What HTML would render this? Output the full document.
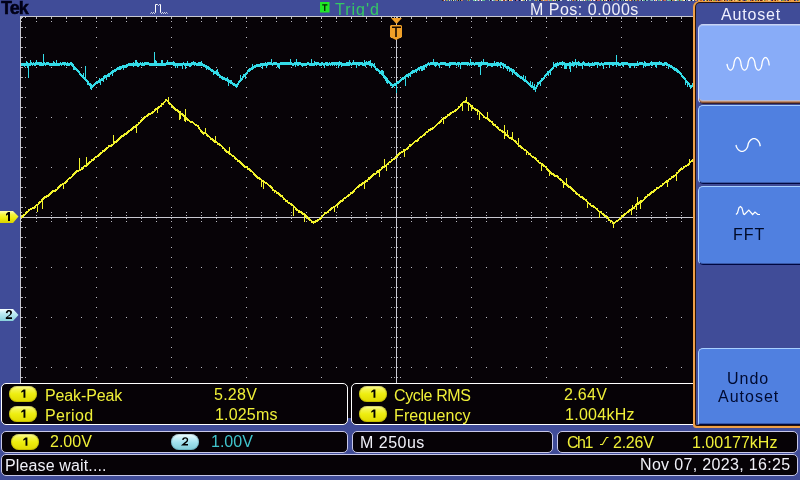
<!DOCTYPE html>
<html><head><meta charset="utf-8">
<style>
*{margin:0;padding:0;box-sizing:border-box}
html,body{width:800px;height:480px;overflow:hidden;background:#404c98;font-family:"Liberation Sans",sans-serif}
.a{position:absolute;white-space:nowrap;line-height:normal;will-change:transform}
.box{position:absolute;background:#060206;border:1px solid #ffffff;border-radius:5px}
.bx2{border-color:#c8c8e8}
.bd{position:absolute;width:28px;height:16px;border-radius:8px;background:linear-gradient(#fafab0 0%,#f4f450 20%,#eeee10 50%,#e0d800 100%);box-shadow:inset 0 0 0 1px rgba(150,140,0,0.35);color:#000;font-size:13px;font-weight:bold;text-align:center;line-height:16px}
.bd2{background:linear-gradient(#f8ffff 0%,#c8f0f8 25%,#a0e0ec 55%,#80ccd8 100%);box-shadow:inset 0 0 0 1px rgba(60,120,140,0.3)}
.btn{position:absolute;left:698px;width:110px;border-radius:5px 0 0 5px}
.bn{background:#5080e0;border-top:1px solid #a8d0ff;border-left:1px solid #a8d0ff;border-bottom:1px solid #000840;box-shadow:inset 0 -1px 0 #3858a8}
</style></head><body>
<svg class="a" style="left:0;top:0" width="800" height="480" viewBox="0 0 800 480" shape-rendering="crispEdges">
<rect x="20" y="16" width="673" height="402" fill="#070307"/>
<path d="M20 16h673v1H21v401h-1z" fill="#c8c8d0"/>
<path d="M21 21h1v1h-1zM21 212h1v1h-1zM21 215h1v1h-1zM21 218h1v1h-1zM21 221h1v1h-1zM25 17h1v1h-1zM25 27h1v1h-1zM25 37h1v1h-1zM25 47h1v1h-1zM25 57h1v1h-1zM25 67h1v1h-1zM25 77h1v1h-1zM25 87h1v1h-1zM25 97h1v1h-1zM25 107h1v1h-1zM25 117h1v1h-1zM25 127h1v1h-1zM25 137h1v1h-1zM25 147h1v1h-1zM25 157h1v1h-1zM25 167h1v1h-1zM25 177h1v1h-1zM25 187h1v1h-1zM25 197h1v1h-1zM25 207h1v1h-1zM25 217h1v1h-1zM25 227h1v1h-1zM25 237h1v1h-1zM25 247h1v1h-1zM25 257h1v1h-1zM25 267h1v1h-1zM25 277h1v1h-1zM25 287h1v1h-1zM25 297h1v1h-1zM25 307h1v1h-1zM25 317h1v1h-1zM25 327h1v1h-1zM25 337h1v1h-1zM25 347h1v1h-1zM25 357h1v1h-1zM25 367h1v1h-1zM25 377h1v1h-1zM25 387h1v1h-1zM25 397h1v1h-1zM25 407h1v1h-1zM25 417h1v1h-1zM36 21h1v1h-1zM36 67h1v1h-1zM36 117h1v1h-1zM36 167h1v1h-1zM36 212h1v1h-1zM36 215h1v1h-1zM36 218h1v1h-1zM36 221h1v1h-1zM36 267h1v1h-1zM36 317h1v1h-1zM36 367h1v1h-1zM36 417h1v1h-1zM51 21h1v1h-1zM51 67h1v1h-1zM51 117h1v1h-1zM51 167h1v1h-1zM51 212h1v1h-1zM51 215h1v1h-1zM51 218h1v1h-1zM51 221h1v1h-1zM51 267h1v1h-1zM51 317h1v1h-1zM51 367h1v1h-1zM51 417h1v1h-1zM66 21h1v1h-1zM66 67h1v1h-1zM66 117h1v1h-1zM66 167h1v1h-1zM66 212h1v1h-1zM66 215h1v1h-1zM66 218h1v1h-1zM66 221h1v1h-1zM66 267h1v1h-1zM66 317h1v1h-1zM66 367h1v1h-1zM66 417h1v1h-1zM81 21h1v1h-1zM81 67h1v1h-1zM81 117h1v1h-1zM81 167h1v1h-1zM81 212h1v1h-1zM81 215h1v1h-1zM81 218h1v1h-1zM81 221h1v1h-1zM81 267h1v1h-1zM81 317h1v1h-1zM81 367h1v1h-1zM81 417h1v1h-1zM96 21h1v1h-1zM96 27h1v1h-1zM96 37h1v1h-1zM96 47h1v1h-1zM96 57h1v1h-1zM96 67h1v1h-1zM96 77h1v1h-1zM96 87h1v1h-1zM96 97h1v1h-1zM96 107h1v1h-1zM96 117h1v1h-1zM96 127h1v1h-1zM96 137h1v1h-1zM96 147h1v1h-1zM96 157h1v1h-1zM96 167h1v1h-1zM96 177h1v1h-1zM96 187h1v1h-1zM96 197h1v1h-1zM96 207h1v1h-1zM96 212h1v1h-1zM96 215h1v1h-1zM96 218h1v1h-1zM96 221h1v1h-1zM96 227h1v1h-1zM96 237h1v1h-1zM96 247h1v1h-1zM96 257h1v1h-1zM96 267h1v1h-1zM96 277h1v1h-1zM96 287h1v1h-1zM96 297h1v1h-1zM96 307h1v1h-1zM96 317h1v1h-1zM96 327h1v1h-1zM96 337h1v1h-1zM96 347h1v1h-1zM96 357h1v1h-1zM96 367h1v1h-1zM96 377h1v1h-1zM96 387h1v1h-1zM96 397h1v1h-1zM96 407h1v1h-1zM96 417h1v1h-1zM111 21h1v1h-1zM111 67h1v1h-1zM111 117h1v1h-1zM111 167h1v1h-1zM111 212h1v1h-1zM111 215h1v1h-1zM111 218h1v1h-1zM111 221h1v1h-1zM111 267h1v1h-1zM111 317h1v1h-1zM111 367h1v1h-1zM111 417h1v1h-1zM126 21h1v1h-1zM126 67h1v1h-1zM126 117h1v1h-1zM126 167h1v1h-1zM126 212h1v1h-1zM126 215h1v1h-1zM126 218h1v1h-1zM126 221h1v1h-1zM126 267h1v1h-1zM126 317h1v1h-1zM126 367h1v1h-1zM126 417h1v1h-1zM141 21h1v1h-1zM141 67h1v1h-1zM141 117h1v1h-1zM141 167h1v1h-1zM141 212h1v1h-1zM141 215h1v1h-1zM141 218h1v1h-1zM141 221h1v1h-1zM141 267h1v1h-1zM141 317h1v1h-1zM141 367h1v1h-1zM141 417h1v1h-1zM156 21h1v1h-1zM156 67h1v1h-1zM156 117h1v1h-1zM156 167h1v1h-1zM156 212h1v1h-1zM156 215h1v1h-1zM156 218h1v1h-1zM156 221h1v1h-1zM156 267h1v1h-1zM156 317h1v1h-1zM156 367h1v1h-1zM156 417h1v1h-1zM171 21h1v1h-1zM171 27h1v1h-1zM171 37h1v1h-1zM171 47h1v1h-1zM171 57h1v1h-1zM171 67h1v1h-1zM171 77h1v1h-1zM171 87h1v1h-1zM171 97h1v1h-1zM171 107h1v1h-1zM171 117h1v1h-1zM171 127h1v1h-1zM171 137h1v1h-1zM171 147h1v1h-1zM171 157h1v1h-1zM171 167h1v1h-1zM171 177h1v1h-1zM171 187h1v1h-1zM171 197h1v1h-1zM171 207h1v1h-1zM171 212h1v1h-1zM171 215h1v1h-1zM171 218h1v1h-1zM171 221h1v1h-1zM171 227h1v1h-1zM171 237h1v1h-1zM171 247h1v1h-1zM171 257h1v1h-1zM171 267h1v1h-1zM171 277h1v1h-1zM171 287h1v1h-1zM171 297h1v1h-1zM171 307h1v1h-1zM171 317h1v1h-1zM171 327h1v1h-1zM171 337h1v1h-1zM171 347h1v1h-1zM171 357h1v1h-1zM171 367h1v1h-1zM171 377h1v1h-1zM171 387h1v1h-1zM171 397h1v1h-1zM171 407h1v1h-1zM171 417h1v1h-1zM186 21h1v1h-1zM186 67h1v1h-1zM186 117h1v1h-1zM186 167h1v1h-1zM186 212h1v1h-1zM186 215h1v1h-1zM186 218h1v1h-1zM186 221h1v1h-1zM186 267h1v1h-1zM186 317h1v1h-1zM186 367h1v1h-1zM186 417h1v1h-1zM201 21h1v1h-1zM201 67h1v1h-1zM201 117h1v1h-1zM201 167h1v1h-1zM201 212h1v1h-1zM201 215h1v1h-1zM201 218h1v1h-1zM201 221h1v1h-1zM201 267h1v1h-1zM201 317h1v1h-1zM201 367h1v1h-1zM201 417h1v1h-1zM216 21h1v1h-1zM216 67h1v1h-1zM216 117h1v1h-1zM216 167h1v1h-1zM216 212h1v1h-1zM216 215h1v1h-1zM216 218h1v1h-1zM216 221h1v1h-1zM216 267h1v1h-1zM216 317h1v1h-1zM216 367h1v1h-1zM216 417h1v1h-1zM231 21h1v1h-1zM231 67h1v1h-1zM231 117h1v1h-1zM231 167h1v1h-1zM231 212h1v1h-1zM231 215h1v1h-1zM231 218h1v1h-1zM231 221h1v1h-1zM231 267h1v1h-1zM231 317h1v1h-1zM231 367h1v1h-1zM231 417h1v1h-1zM246 21h1v1h-1zM246 27h1v1h-1zM246 37h1v1h-1zM246 47h1v1h-1zM246 57h1v1h-1zM246 67h1v1h-1zM246 77h1v1h-1zM246 87h1v1h-1zM246 97h1v1h-1zM246 107h1v1h-1zM246 117h1v1h-1zM246 127h1v1h-1zM246 137h1v1h-1zM246 147h1v1h-1zM246 157h1v1h-1zM246 167h1v1h-1zM246 177h1v1h-1zM246 187h1v1h-1zM246 197h1v1h-1zM246 207h1v1h-1zM246 212h1v1h-1zM246 215h1v1h-1zM246 218h1v1h-1zM246 221h1v1h-1zM246 227h1v1h-1zM246 237h1v1h-1zM246 247h1v1h-1zM246 257h1v1h-1zM246 267h1v1h-1zM246 277h1v1h-1zM246 287h1v1h-1zM246 297h1v1h-1zM246 307h1v1h-1zM246 317h1v1h-1zM246 327h1v1h-1zM246 337h1v1h-1zM246 347h1v1h-1zM246 357h1v1h-1zM246 367h1v1h-1zM246 377h1v1h-1zM246 387h1v1h-1zM246 397h1v1h-1zM246 407h1v1h-1zM246 417h1v1h-1zM261 21h1v1h-1zM261 67h1v1h-1zM261 117h1v1h-1zM261 167h1v1h-1zM261 212h1v1h-1zM261 215h1v1h-1zM261 218h1v1h-1zM261 221h1v1h-1zM261 267h1v1h-1zM261 317h1v1h-1zM261 367h1v1h-1zM261 417h1v1h-1zM276 21h1v1h-1zM276 67h1v1h-1zM276 117h1v1h-1zM276 167h1v1h-1zM276 212h1v1h-1zM276 215h1v1h-1zM276 218h1v1h-1zM276 221h1v1h-1zM276 267h1v1h-1zM276 317h1v1h-1zM276 367h1v1h-1zM276 417h1v1h-1zM291 21h1v1h-1zM291 67h1v1h-1zM291 117h1v1h-1zM291 167h1v1h-1zM291 212h1v1h-1zM291 215h1v1h-1zM291 218h1v1h-1zM291 221h1v1h-1zM291 267h1v1h-1zM291 317h1v1h-1zM291 367h1v1h-1zM291 417h1v1h-1zM306 21h1v1h-1zM306 67h1v1h-1zM306 117h1v1h-1zM306 167h1v1h-1zM306 212h1v1h-1zM306 215h1v1h-1zM306 218h1v1h-1zM306 221h1v1h-1zM306 267h1v1h-1zM306 317h1v1h-1zM306 367h1v1h-1zM306 417h1v1h-1zM321 21h1v1h-1zM321 27h1v1h-1zM321 37h1v1h-1zM321 47h1v1h-1zM321 57h1v1h-1zM321 67h1v1h-1zM321 77h1v1h-1zM321 87h1v1h-1zM321 97h1v1h-1zM321 107h1v1h-1zM321 117h1v1h-1zM321 127h1v1h-1zM321 137h1v1h-1zM321 147h1v1h-1zM321 157h1v1h-1zM321 167h1v1h-1zM321 177h1v1h-1zM321 187h1v1h-1zM321 197h1v1h-1zM321 207h1v1h-1zM321 212h1v1h-1zM321 215h1v1h-1zM321 218h1v1h-1zM321 221h1v1h-1zM321 227h1v1h-1zM321 237h1v1h-1zM321 247h1v1h-1zM321 257h1v1h-1zM321 267h1v1h-1zM321 277h1v1h-1zM321 287h1v1h-1zM321 297h1v1h-1zM321 307h1v1h-1zM321 317h1v1h-1zM321 327h1v1h-1zM321 337h1v1h-1zM321 347h1v1h-1zM321 357h1v1h-1zM321 367h1v1h-1zM321 377h1v1h-1zM321 387h1v1h-1zM321 397h1v1h-1zM321 407h1v1h-1zM321 417h1v1h-1zM336 21h1v1h-1zM336 67h1v1h-1zM336 117h1v1h-1zM336 167h1v1h-1zM336 212h1v1h-1zM336 215h1v1h-1zM336 218h1v1h-1zM336 221h1v1h-1zM336 267h1v1h-1zM336 317h1v1h-1zM336 367h1v1h-1zM336 417h1v1h-1zM351 21h1v1h-1zM351 67h1v1h-1zM351 117h1v1h-1zM351 167h1v1h-1zM351 212h1v1h-1zM351 215h1v1h-1zM351 218h1v1h-1zM351 221h1v1h-1zM351 267h1v1h-1zM351 317h1v1h-1zM351 367h1v1h-1zM351 417h1v1h-1zM366 21h1v1h-1zM366 67h1v1h-1zM366 117h1v1h-1zM366 167h1v1h-1zM366 212h1v1h-1zM366 215h1v1h-1zM366 218h1v1h-1zM366 221h1v1h-1zM366 267h1v1h-1zM366 317h1v1h-1zM366 367h1v1h-1zM366 417h1v1h-1zM381 21h1v1h-1zM381 67h1v1h-1zM381 117h1v1h-1zM381 167h1v1h-1zM381 212h1v1h-1zM381 215h1v1h-1zM381 218h1v1h-1zM381 221h1v1h-1zM381 267h1v1h-1zM381 317h1v1h-1zM381 367h1v1h-1zM381 417h1v1h-1zM391 17h1v1h-1zM391 27h1v1h-1zM391 37h1v1h-1zM391 47h1v1h-1zM391 57h1v1h-1zM391 67h1v1h-1zM391 77h1v1h-1zM391 87h1v1h-1zM391 97h1v1h-1zM391 107h1v1h-1zM391 117h1v1h-1zM391 127h1v1h-1zM391 137h1v1h-1zM391 147h1v1h-1zM391 157h1v1h-1zM391 167h1v1h-1zM391 177h1v1h-1zM391 187h1v1h-1zM391 197h1v1h-1zM391 207h1v1h-1zM391 217h1v1h-1zM391 227h1v1h-1zM391 237h1v1h-1zM391 247h1v1h-1zM391 257h1v1h-1zM391 267h1v1h-1zM391 277h1v1h-1zM391 287h1v1h-1zM391 297h1v1h-1zM391 307h1v1h-1zM391 317h1v1h-1zM391 327h1v1h-1zM391 337h1v1h-1zM391 347h1v1h-1zM391 357h1v1h-1zM391 367h1v1h-1zM391 377h1v1h-1zM391 387h1v1h-1zM391 397h1v1h-1zM391 407h1v1h-1zM391 417h1v1h-1zM394 17h1v1h-1zM394 27h1v1h-1zM394 37h1v1h-1zM394 47h1v1h-1zM394 57h1v1h-1zM394 67h1v1h-1zM394 77h1v1h-1zM394 87h1v1h-1zM394 97h1v1h-1zM394 107h1v1h-1zM394 117h1v1h-1zM394 127h1v1h-1zM394 137h1v1h-1zM394 147h1v1h-1zM394 157h1v1h-1zM394 167h1v1h-1zM394 177h1v1h-1zM394 187h1v1h-1zM394 197h1v1h-1zM394 207h1v1h-1zM394 217h1v1h-1zM394 227h1v1h-1zM394 237h1v1h-1zM394 247h1v1h-1zM394 257h1v1h-1zM394 267h1v1h-1zM394 277h1v1h-1zM394 287h1v1h-1zM394 297h1v1h-1zM394 307h1v1h-1zM394 317h1v1h-1zM394 327h1v1h-1zM394 337h1v1h-1zM394 347h1v1h-1zM394 357h1v1h-1zM394 367h1v1h-1zM394 377h1v1h-1zM394 387h1v1h-1zM394 397h1v1h-1zM394 407h1v1h-1zM394 417h1v1h-1zM396 21h1v1h-1zM396 212h1v1h-1zM396 215h1v1h-1zM396 218h1v1h-1zM396 221h1v1h-1zM397 17h1v1h-1zM397 27h1v1h-1zM397 37h1v1h-1zM397 47h1v1h-1zM397 57h1v1h-1zM397 67h1v1h-1zM397 77h1v1h-1zM397 87h1v1h-1zM397 97h1v1h-1zM397 107h1v1h-1zM397 117h1v1h-1zM397 127h1v1h-1zM397 137h1v1h-1zM397 147h1v1h-1zM397 157h1v1h-1zM397 167h1v1h-1zM397 177h1v1h-1zM397 187h1v1h-1zM397 197h1v1h-1zM397 207h1v1h-1zM397 217h1v1h-1zM397 227h1v1h-1zM397 237h1v1h-1zM397 247h1v1h-1zM397 257h1v1h-1zM397 267h1v1h-1zM397 277h1v1h-1zM397 287h1v1h-1zM397 297h1v1h-1zM397 307h1v1h-1zM397 317h1v1h-1zM397 327h1v1h-1zM397 337h1v1h-1zM397 347h1v1h-1zM397 357h1v1h-1zM397 367h1v1h-1zM397 377h1v1h-1zM397 387h1v1h-1zM397 397h1v1h-1zM397 407h1v1h-1zM397 417h1v1h-1zM400 17h1v1h-1zM400 27h1v1h-1zM400 37h1v1h-1zM400 47h1v1h-1zM400 57h1v1h-1zM400 67h1v1h-1zM400 77h1v1h-1zM400 87h1v1h-1zM400 97h1v1h-1zM400 107h1v1h-1zM400 117h1v1h-1zM400 127h1v1h-1zM400 137h1v1h-1zM400 147h1v1h-1zM400 157h1v1h-1zM400 167h1v1h-1zM400 177h1v1h-1zM400 187h1v1h-1zM400 197h1v1h-1zM400 207h1v1h-1zM400 217h1v1h-1zM400 227h1v1h-1zM400 237h1v1h-1zM400 247h1v1h-1zM400 257h1v1h-1zM400 267h1v1h-1zM400 277h1v1h-1zM400 287h1v1h-1zM400 297h1v1h-1zM400 307h1v1h-1zM400 317h1v1h-1zM400 327h1v1h-1zM400 337h1v1h-1zM400 347h1v1h-1zM400 357h1v1h-1zM400 367h1v1h-1zM400 377h1v1h-1zM400 387h1v1h-1zM400 397h1v1h-1zM400 407h1v1h-1zM400 417h1v1h-1zM411 21h1v1h-1zM411 67h1v1h-1zM411 117h1v1h-1zM411 167h1v1h-1zM411 212h1v1h-1zM411 215h1v1h-1zM411 218h1v1h-1zM411 221h1v1h-1zM411 267h1v1h-1zM411 317h1v1h-1zM411 367h1v1h-1zM411 417h1v1h-1zM426 21h1v1h-1zM426 67h1v1h-1zM426 117h1v1h-1zM426 167h1v1h-1zM426 212h1v1h-1zM426 215h1v1h-1zM426 218h1v1h-1zM426 221h1v1h-1zM426 267h1v1h-1zM426 317h1v1h-1zM426 367h1v1h-1zM426 417h1v1h-1zM441 21h1v1h-1zM441 67h1v1h-1zM441 117h1v1h-1zM441 167h1v1h-1zM441 212h1v1h-1zM441 215h1v1h-1zM441 218h1v1h-1zM441 221h1v1h-1zM441 267h1v1h-1zM441 317h1v1h-1zM441 367h1v1h-1zM441 417h1v1h-1zM456 21h1v1h-1zM456 67h1v1h-1zM456 117h1v1h-1zM456 167h1v1h-1zM456 212h1v1h-1zM456 215h1v1h-1zM456 218h1v1h-1zM456 221h1v1h-1zM456 267h1v1h-1zM456 317h1v1h-1zM456 367h1v1h-1zM456 417h1v1h-1zM471 21h1v1h-1zM471 27h1v1h-1zM471 37h1v1h-1zM471 47h1v1h-1zM471 57h1v1h-1zM471 67h1v1h-1zM471 77h1v1h-1zM471 87h1v1h-1zM471 97h1v1h-1zM471 107h1v1h-1zM471 117h1v1h-1zM471 127h1v1h-1zM471 137h1v1h-1zM471 147h1v1h-1zM471 157h1v1h-1zM471 167h1v1h-1zM471 177h1v1h-1zM471 187h1v1h-1zM471 197h1v1h-1zM471 207h1v1h-1zM471 212h1v1h-1zM471 215h1v1h-1zM471 218h1v1h-1zM471 221h1v1h-1zM471 227h1v1h-1zM471 237h1v1h-1zM471 247h1v1h-1zM471 257h1v1h-1zM471 267h1v1h-1zM471 277h1v1h-1zM471 287h1v1h-1zM471 297h1v1h-1zM471 307h1v1h-1zM471 317h1v1h-1zM471 327h1v1h-1zM471 337h1v1h-1zM471 347h1v1h-1zM471 357h1v1h-1zM471 367h1v1h-1zM471 377h1v1h-1zM471 387h1v1h-1zM471 397h1v1h-1zM471 407h1v1h-1zM471 417h1v1h-1zM486 21h1v1h-1zM486 67h1v1h-1zM486 117h1v1h-1zM486 167h1v1h-1zM486 212h1v1h-1zM486 215h1v1h-1zM486 218h1v1h-1zM486 221h1v1h-1zM486 267h1v1h-1zM486 317h1v1h-1zM486 367h1v1h-1zM486 417h1v1h-1zM501 21h1v1h-1zM501 67h1v1h-1zM501 117h1v1h-1zM501 167h1v1h-1zM501 212h1v1h-1zM501 215h1v1h-1zM501 218h1v1h-1zM501 221h1v1h-1zM501 267h1v1h-1zM501 317h1v1h-1zM501 367h1v1h-1zM501 417h1v1h-1zM516 21h1v1h-1zM516 67h1v1h-1zM516 117h1v1h-1zM516 167h1v1h-1zM516 212h1v1h-1zM516 215h1v1h-1zM516 218h1v1h-1zM516 221h1v1h-1zM516 267h1v1h-1zM516 317h1v1h-1zM516 367h1v1h-1zM516 417h1v1h-1zM531 21h1v1h-1zM531 67h1v1h-1zM531 117h1v1h-1zM531 167h1v1h-1zM531 212h1v1h-1zM531 215h1v1h-1zM531 218h1v1h-1zM531 221h1v1h-1zM531 267h1v1h-1zM531 317h1v1h-1zM531 367h1v1h-1zM531 417h1v1h-1zM546 21h1v1h-1zM546 27h1v1h-1zM546 37h1v1h-1zM546 47h1v1h-1zM546 57h1v1h-1zM546 67h1v1h-1zM546 77h1v1h-1zM546 87h1v1h-1zM546 97h1v1h-1zM546 107h1v1h-1zM546 117h1v1h-1zM546 127h1v1h-1zM546 137h1v1h-1zM546 147h1v1h-1zM546 157h1v1h-1zM546 167h1v1h-1zM546 177h1v1h-1zM546 187h1v1h-1zM546 197h1v1h-1zM546 207h1v1h-1zM546 212h1v1h-1zM546 215h1v1h-1zM546 218h1v1h-1zM546 221h1v1h-1zM546 227h1v1h-1zM546 237h1v1h-1zM546 247h1v1h-1zM546 257h1v1h-1zM546 267h1v1h-1zM546 277h1v1h-1zM546 287h1v1h-1zM546 297h1v1h-1zM546 307h1v1h-1zM546 317h1v1h-1zM546 327h1v1h-1zM546 337h1v1h-1zM546 347h1v1h-1zM546 357h1v1h-1zM546 367h1v1h-1zM546 377h1v1h-1zM546 387h1v1h-1zM546 397h1v1h-1zM546 407h1v1h-1zM546 417h1v1h-1zM561 21h1v1h-1zM561 67h1v1h-1zM561 117h1v1h-1zM561 167h1v1h-1zM561 212h1v1h-1zM561 215h1v1h-1zM561 218h1v1h-1zM561 221h1v1h-1zM561 267h1v1h-1zM561 317h1v1h-1zM561 367h1v1h-1zM561 417h1v1h-1zM576 21h1v1h-1zM576 67h1v1h-1zM576 117h1v1h-1zM576 167h1v1h-1zM576 212h1v1h-1zM576 215h1v1h-1zM576 218h1v1h-1zM576 221h1v1h-1zM576 267h1v1h-1zM576 317h1v1h-1zM576 367h1v1h-1zM576 417h1v1h-1zM591 21h1v1h-1zM591 67h1v1h-1zM591 117h1v1h-1zM591 167h1v1h-1zM591 212h1v1h-1zM591 215h1v1h-1zM591 218h1v1h-1zM591 221h1v1h-1zM591 267h1v1h-1zM591 317h1v1h-1zM591 367h1v1h-1zM591 417h1v1h-1zM606 21h1v1h-1zM606 67h1v1h-1zM606 117h1v1h-1zM606 167h1v1h-1zM606 212h1v1h-1zM606 215h1v1h-1zM606 218h1v1h-1zM606 221h1v1h-1zM606 267h1v1h-1zM606 317h1v1h-1zM606 367h1v1h-1zM606 417h1v1h-1zM621 21h1v1h-1zM621 27h1v1h-1zM621 37h1v1h-1zM621 47h1v1h-1zM621 57h1v1h-1zM621 67h1v1h-1zM621 77h1v1h-1zM621 87h1v1h-1zM621 97h1v1h-1zM621 107h1v1h-1zM621 117h1v1h-1zM621 127h1v1h-1zM621 137h1v1h-1zM621 147h1v1h-1zM621 157h1v1h-1zM621 167h1v1h-1zM621 177h1v1h-1zM621 187h1v1h-1zM621 197h1v1h-1zM621 207h1v1h-1zM621 212h1v1h-1zM621 215h1v1h-1zM621 218h1v1h-1zM621 221h1v1h-1zM621 227h1v1h-1zM621 237h1v1h-1zM621 247h1v1h-1zM621 257h1v1h-1zM621 267h1v1h-1zM621 277h1v1h-1zM621 287h1v1h-1zM621 297h1v1h-1zM621 307h1v1h-1zM621 317h1v1h-1zM621 327h1v1h-1zM621 337h1v1h-1zM621 347h1v1h-1zM621 357h1v1h-1zM621 367h1v1h-1zM621 377h1v1h-1zM621 387h1v1h-1zM621 397h1v1h-1zM621 407h1v1h-1zM621 417h1v1h-1zM636 21h1v1h-1zM636 67h1v1h-1zM636 117h1v1h-1zM636 167h1v1h-1zM636 212h1v1h-1zM636 215h1v1h-1zM636 218h1v1h-1zM636 221h1v1h-1zM636 267h1v1h-1zM636 317h1v1h-1zM636 367h1v1h-1zM636 417h1v1h-1zM651 21h1v1h-1zM651 67h1v1h-1zM651 117h1v1h-1zM651 167h1v1h-1zM651 212h1v1h-1zM651 215h1v1h-1zM651 218h1v1h-1zM651 221h1v1h-1zM651 267h1v1h-1zM651 317h1v1h-1zM651 367h1v1h-1zM651 417h1v1h-1zM666 21h1v1h-1zM666 67h1v1h-1zM666 117h1v1h-1zM666 167h1v1h-1zM666 212h1v1h-1zM666 215h1v1h-1zM666 218h1v1h-1zM666 221h1v1h-1zM666 267h1v1h-1zM666 317h1v1h-1zM666 367h1v1h-1zM666 417h1v1h-1zM681 21h1v1h-1zM681 67h1v1h-1zM681 117h1v1h-1zM681 167h1v1h-1zM681 212h1v1h-1zM681 215h1v1h-1zM681 218h1v1h-1zM681 221h1v1h-1zM681 267h1v1h-1zM681 317h1v1h-1zM681 367h1v1h-1zM681 417h1v1h-1zM21 17h1v2h-1zM36 17h1v2h-1zM51 17h1v2h-1zM66 17h1v2h-1zM81 17h1v2h-1zM96 17h1v2h-1zM111 17h1v2h-1zM126 17h1v2h-1zM141 17h1v2h-1zM156 17h1v2h-1zM171 17h1v2h-1zM186 17h1v2h-1zM201 17h1v2h-1zM216 17h1v2h-1zM231 17h1v2h-1zM246 17h1v2h-1zM261 17h1v2h-1zM276 17h1v2h-1zM291 17h1v2h-1zM306 17h1v2h-1zM321 17h1v2h-1zM336 17h1v2h-1zM351 17h1v2h-1zM366 17h1v2h-1zM381 17h1v2h-1zM396 17h1v2h-1zM411 17h1v2h-1zM426 17h1v2h-1zM441 17h1v2h-1zM456 17h1v2h-1zM471 17h1v2h-1zM486 17h1v2h-1zM501 17h1v2h-1zM516 17h1v2h-1zM531 17h1v2h-1zM546 17h1v2h-1zM561 17h1v2h-1zM576 17h1v2h-1zM591 17h1v2h-1zM606 17h1v2h-1zM621 17h1v2h-1zM636 17h1v2h-1zM651 17h1v2h-1zM666 17h1v2h-1zM681 17h1v2h-1zM21 17h2v1h-2zM21 27h2v1h-2zM21 37h2v1h-2zM21 47h2v1h-2zM21 57h2v1h-2zM21 67h2v1h-2zM21 77h2v1h-2zM21 87h2v1h-2zM21 97h2v1h-2zM21 107h2v1h-2zM21 117h2v1h-2zM21 127h2v1h-2zM21 137h2v1h-2zM21 147h2v1h-2zM21 157h2v1h-2zM21 167h2v1h-2zM21 177h2v1h-2zM21 187h2v1h-2zM21 197h2v1h-2zM21 207h2v1h-2zM21 217h2v1h-2zM21 227h2v1h-2zM21 237h2v1h-2zM21 247h2v1h-2zM21 257h2v1h-2zM21 267h2v1h-2zM21 277h2v1h-2zM21 287h2v1h-2zM21 297h2v1h-2zM21 307h2v1h-2zM21 317h2v1h-2zM21 327h2v1h-2zM21 337h2v1h-2zM21 347h2v1h-2zM21 357h2v1h-2zM21 367h2v1h-2zM21 377h2v1h-2zM21 387h2v1h-2zM21 397h2v1h-2zM21 407h2v1h-2zM21 417h2v1h-2z" fill="#b8b8c0"/>
<rect x="396" y="17" width="1" height="400" fill="#c8c8d0"/>
<rect x="21" y="217" width="672" height="1" fill="#c8c8d0"/>
<path d="M21 63h1v3h-1zM22 63h1v3h-1zM23 63h1v3h-1zM24 63h1v4h-1zM25 63h1v3h-1zM26 61h1v5h-1zM27 62h1v6h-1zM28 63h1v15h-1zM29 63h1v3h-1zM30 60h1v6h-1zM31 62h1v3h-1zM32 63h1v3h-1zM33 62h1v3h-1zM34 63h1v3h-1zM35 62h1v4h-1zM36 60h1v5h-1zM37 62h1v3h-1zM38 62h1v3h-1zM39 62h1v4h-1zM40 62h1v4h-1zM41 62h1v4h-1zM42 63h1v3h-1zM43 54h1v12h-1zM44 62h1v3h-1zM45 63h1v3h-1zM46 62h1v3h-1zM47 62h1v3h-1zM48 62h1v3h-1zM49 63h1v3h-1zM50 63h1v3h-1zM51 63h1v3h-1zM52 63h1v3h-1zM53 61h1v5h-1zM54 62h1v4h-1zM55 63h1v3h-1zM56 60h1v6h-1zM57 63h1v3h-1zM58 63h1v3h-1zM59 63h1v3h-1zM60 62h1v3h-1zM61 63h1v3h-1zM62 62h1v3h-1zM63 62h1v3h-1zM64 62h1v4h-1zM65 62h1v3h-1zM66 63h1v3h-1zM67 62h1v4h-1zM68 63h1v3h-1zM69 63h1v3h-1zM70 62h1v3h-1zM71 62h1v4h-1zM72 63h1v4h-1zM73 64h1v6h-1zM74 66h1v4h-1zM75 67h1v3h-1zM76 68h1v3h-1zM77 69h1v3h-1zM78 70h1v3h-1zM79 71h1v4h-1zM80 73h1v3h-1zM81 74h1v3h-1zM82 75h1v3h-1zM83 73h1v6h-1zM84 77h1v3h-1zM85 66h1v15h-1zM86 79h1v3h-1zM87 80h1v5h-1zM88 81h1v4h-1zM89 83h1v3h-1zM90 83h1v6h-1zM91 84h1v6h-1zM92 85h1v3h-1zM93 84h1v3h-1zM94 83h1v3h-1zM95 82h1v3h-1zM96 81h1v3h-1zM97 81h1v3h-1zM98 80h1v3h-1zM99 78h1v5h-1zM100 79h1v6h-1zM101 78h1v3h-1zM102 78h1v3h-1zM103 76h1v6h-1zM104 75h1v4h-1zM105 75h1v3h-1zM106 75h1v5h-1zM107 74h1v3h-1zM108 73h1v4h-1zM109 73h1v4h-1zM110 72h1v3h-1zM111 71h1v3h-1zM112 70h1v6h-1zM113 70h1v3h-1zM114 69h1v3h-1zM115 69h1v3h-1zM116 68h1v3h-1zM117 67h1v3h-1zM118 67h1v3h-1zM119 66h1v4h-1zM120 66h1v4h-1zM121 66h1v3h-1zM122 65h1v3h-1zM123 65h1v5h-1zM124 65h1v3h-1zM125 65h1v3h-1zM126 64h1v4h-1zM127 64h1v3h-1zM128 63h1v3h-1zM129 63h1v3h-1zM130 63h1v3h-1zM131 63h1v3h-1zM132 63h1v3h-1zM133 62h1v5h-1zM134 63h1v3h-1zM135 60h1v6h-1zM136 60h1v6h-1zM137 62h1v5h-1zM138 63h1v4h-1zM139 63h1v3h-1zM140 62h1v3h-1zM141 63h1v3h-1zM142 62h1v4h-1zM143 63h1v3h-1zM144 62h1v4h-1zM145 62h1v3h-1zM146 62h1v3h-1zM147 62h1v3h-1zM148 62h1v3h-1zM149 63h1v3h-1zM150 63h1v3h-1zM151 63h1v3h-1zM152 63h1v3h-1zM153 63h1v3h-1zM154 52h1v14h-1zM155 60h1v6h-1zM156 61h1v5h-1zM157 63h1v3h-1zM158 63h1v3h-1zM159 63h1v3h-1zM160 63h1v3h-1zM161 60h1v6h-1zM162 60h1v6h-1zM163 63h1v3h-1zM164 63h1v3h-1zM165 63h1v3h-1zM166 62h1v3h-1zM167 60h1v5h-1zM168 62h1v3h-1zM169 62h1v3h-1zM170 62h1v3h-1zM171 62h1v3h-1zM172 62h1v3h-1zM173 61h1v5h-1zM174 62h1v4h-1zM175 63h1v5h-1zM176 63h1v3h-1zM177 63h1v5h-1zM178 63h1v3h-1zM179 63h1v3h-1zM180 63h1v3h-1zM181 63h1v3h-1zM182 63h1v6h-1zM183 62h1v3h-1zM184 63h1v3h-1zM185 63h1v6h-1zM186 63h1v3h-1zM187 61h1v5h-1zM188 63h1v3h-1zM189 63h1v4h-1zM190 63h1v4h-1zM191 62h1v4h-1zM192 62h1v3h-1zM193 61h1v4h-1zM194 62h1v4h-1zM195 62h1v3h-1zM196 63h1v3h-1zM197 63h1v3h-1zM198 62h1v4h-1zM199 62h1v4h-1zM200 62h1v4h-1zM201 61h1v5h-1zM202 63h1v3h-1zM203 64h1v3h-1zM204 64h1v3h-1zM205 65h1v3h-1zM206 65h1v5h-1zM207 66h1v3h-1zM208 66h1v4h-1zM209 67h1v3h-1zM210 68h1v3h-1zM211 69h1v3h-1zM212 69h1v3h-1zM213 70h1v5h-1zM214 71h1v3h-1zM215 71h1v3h-1zM216 70h1v5h-1zM217 69h1v7h-1zM218 72h1v4h-1zM219 74h1v4h-1zM220 75h1v3h-1zM221 76h1v3h-1zM222 76h1v4h-1zM223 77h1v3h-1zM224 77h1v3h-1zM225 78h1v3h-1zM226 78h1v3h-1zM227 77h1v5h-1zM228 79h1v7h-1zM229 80h1v3h-1zM230 80h1v4h-1zM231 80h1v4h-1zM232 82h1v3h-1zM233 83h1v3h-1zM234 83h1v3h-1zM235 84h1v3h-1zM236 84h1v4h-1zM237 83h1v4h-1zM238 81h1v4h-1zM239 80h1v3h-1zM240 75h1v7h-1zM241 78h1v3h-1zM242 76h1v4h-1zM243 74h1v4h-1zM244 74h1v3h-1zM245 73h1v6h-1zM246 72h1v3h-1zM247 70h1v4h-1zM248 69h1v3h-1zM249 68h1v4h-1zM250 68h1v3h-1zM251 67h1v3h-1zM252 64h1v6h-1zM253 66h1v3h-1zM254 65h1v3h-1zM255 65h1v3h-1zM256 64h1v3h-1zM257 64h1v3h-1zM258 64h1v3h-1zM259 64h1v3h-1zM260 63h1v4h-1zM261 63h1v3h-1zM262 63h1v6h-1zM263 63h1v3h-1zM264 63h1v3h-1zM265 62h1v4h-1zM266 63h1v5h-1zM267 62h1v4h-1zM268 62h1v3h-1zM269 62h1v3h-1zM270 62h1v3h-1zM271 59h1v6h-1zM272 63h1v3h-1zM273 62h1v3h-1zM274 62h1v3h-1zM275 62h1v3h-1zM276 62h1v3h-1zM277 63h1v4h-1zM278 63h1v5h-1zM279 63h1v6h-1zM280 62h1v3h-1zM281 62h1v3h-1zM282 62h1v3h-1zM283 62h1v3h-1zM284 62h1v3h-1zM285 62h1v3h-1zM286 62h1v3h-1zM287 62h1v3h-1zM288 62h1v3h-1zM289 62h1v3h-1zM290 59h1v6h-1zM291 62h1v3h-1zM292 63h1v3h-1zM293 63h1v3h-1zM294 62h1v3h-1zM295 62h1v5h-1zM296 59h1v6h-1zM297 62h1v4h-1zM298 62h1v4h-1zM299 62h1v3h-1zM300 62h1v3h-1zM301 63h1v3h-1zM302 63h1v4h-1zM303 63h1v3h-1zM304 63h1v3h-1zM305 63h1v3h-1zM306 63h1v3h-1zM307 62h1v3h-1zM308 62h1v3h-1zM309 63h1v3h-1zM310 63h1v3h-1zM311 59h1v7h-1zM312 63h1v3h-1zM313 63h1v3h-1zM314 61h1v5h-1zM315 62h1v3h-1zM316 62h1v4h-1zM317 62h1v3h-1zM318 62h1v3h-1zM319 63h1v3h-1zM320 63h1v3h-1zM321 62h1v4h-1zM322 62h1v3h-1zM323 63h1v3h-1zM324 63h1v5h-1zM325 62h1v3h-1zM326 62h1v4h-1zM327 62h1v4h-1zM328 63h1v3h-1zM329 62h1v3h-1zM330 63h1v3h-1zM331 62h1v3h-1zM332 62h1v4h-1zM333 62h1v3h-1zM334 62h1v4h-1zM335 62h1v3h-1zM336 62h1v4h-1zM337 62h1v3h-1zM338 62h1v6h-1zM339 61h1v5h-1zM340 62h1v3h-1zM341 62h1v5h-1zM342 63h1v3h-1zM343 63h1v3h-1zM344 63h1v3h-1zM345 63h1v3h-1zM346 62h1v4h-1zM347 62h1v4h-1zM348 62h1v4h-1zM349 60h1v6h-1zM350 62h1v3h-1zM351 63h1v3h-1zM352 62h1v3h-1zM353 60h1v5h-1zM354 62h1v3h-1zM355 62h1v3h-1zM356 62h1v6h-1zM357 62h1v3h-1zM358 62h1v4h-1zM359 62h1v4h-1zM360 62h1v3h-1zM361 62h1v3h-1zM362 62h1v4h-1zM363 63h1v3h-1zM364 60h1v6h-1zM365 62h1v5h-1zM366 61h1v4h-1zM367 62h1v3h-1zM368 61h1v4h-1zM369 61h1v5h-1zM370 60h1v6h-1zM371 63h1v5h-1zM372 63h1v3h-1zM373 64h1v3h-1zM374 63h1v5h-1zM375 66h1v4h-1zM376 68h1v3h-1zM377 68h1v3h-1zM378 69h1v3h-1zM379 70h1v4h-1zM380 71h1v3h-1zM381 70h1v5h-1zM382 70h1v6h-1zM383 71h1v7h-1zM384 75h1v4h-1zM385 76h1v5h-1zM386 77h1v6h-1zM387 78h1v6h-1zM388 80h1v3h-1zM389 81h1v3h-1zM390 82h1v4h-1zM391 83h1v3h-1zM392 84h1v4h-1zM393 84h1v3h-1zM394 83h1v3h-1zM395 83h1v3h-1zM396 82h1v11h-1zM397 81h1v3h-1zM398 81h1v3h-1zM399 80h1v3h-1zM400 79h1v3h-1zM401 78h1v3h-1zM402 77h1v3h-1zM403 77h1v3h-1zM404 76h1v3h-1zM405 75h1v11h-1zM406 74h1v3h-1zM407 74h1v3h-1zM408 73h1v5h-1zM409 73h1v3h-1zM410 72h1v5h-1zM411 71h1v3h-1zM412 70h1v4h-1zM413 70h1v3h-1zM414 70h1v3h-1zM415 69h1v3h-1zM416 69h1v4h-1zM417 68h1v3h-1zM418 67h1v3h-1zM419 67h1v4h-1zM420 66h1v3h-1zM421 66h1v5h-1zM422 66h1v5h-1zM423 65h1v5h-1zM424 65h1v5h-1zM425 64h1v3h-1zM426 64h1v4h-1zM427 63h1v3h-1zM428 62h1v3h-1zM429 63h1v3h-1zM430 62h1v3h-1zM431 62h1v3h-1zM432 62h1v3h-1zM433 59h1v6h-1zM434 62h1v4h-1zM435 62h1v5h-1zM436 62h1v4h-1zM437 62h1v3h-1zM438 63h1v3h-1zM439 63h1v5h-1zM440 62h1v3h-1zM441 62h1v3h-1zM442 62h1v3h-1zM443 62h1v3h-1zM444 62h1v3h-1zM445 62h1v4h-1zM446 63h1v3h-1zM447 63h1v3h-1zM448 63h1v3h-1zM449 62h1v6h-1zM450 62h1v4h-1zM451 62h1v3h-1zM452 62h1v3h-1zM453 62h1v3h-1zM454 62h1v3h-1zM455 62h1v3h-1zM456 63h1v3h-1zM457 62h1v3h-1zM458 62h1v5h-1zM459 62h1v3h-1zM460 63h1v6h-1zM461 62h1v3h-1zM462 62h1v3h-1zM463 62h1v3h-1zM464 62h1v3h-1zM465 62h1v3h-1zM466 62h1v3h-1zM467 62h1v4h-1zM468 62h1v3h-1zM469 63h1v3h-1zM470 59h1v6h-1zM471 62h1v4h-1zM472 62h1v3h-1zM473 62h1v3h-1zM474 63h1v3h-1zM475 62h1v3h-1zM476 62h1v3h-1zM477 62h1v3h-1zM478 62h1v5h-1zM479 62h1v5h-1zM480 62h1v13h-1zM481 61h1v5h-1zM482 62h1v3h-1zM483 59h1v6h-1zM484 62h1v3h-1zM485 62h1v3h-1zM486 62h1v3h-1zM487 62h1v5h-1zM488 63h1v3h-1zM489 63h1v3h-1zM490 63h1v3h-1zM491 63h1v4h-1zM492 63h1v4h-1zM493 63h1v3h-1zM494 61h1v5h-1zM495 63h1v3h-1zM496 62h1v4h-1zM497 62h1v5h-1zM498 62h1v4h-1zM499 63h1v3h-1zM500 62h1v6h-1zM501 62h1v3h-1zM502 63h1v3h-1zM503 63h1v6h-1zM504 64h1v3h-1zM505 64h1v4h-1zM506 66h1v3h-1zM507 66h1v5h-1zM508 66h1v3h-1zM509 67h1v5h-1zM510 68h1v3h-1zM511 68h1v4h-1zM512 69h1v6h-1zM513 69h1v4h-1zM514 70h1v4h-1zM515 72h1v3h-1zM516 72h1v4h-1zM517 73h1v4h-1zM518 74h1v3h-1zM519 75h1v3h-1zM520 76h1v3h-1zM521 76h1v3h-1zM522 77h1v3h-1zM523 75h1v6h-1zM524 79h1v3h-1zM525 76h1v6h-1zM526 80h1v3h-1zM527 81h1v3h-1zM528 82h1v3h-1zM529 83h1v3h-1zM530 81h1v6h-1zM531 85h1v3h-1zM532 82h1v6h-1zM533 86h1v4h-1zM534 84h1v6h-1zM535 87h1v5h-1zM536 85h1v4h-1zM537 82h1v5h-1zM538 82h1v3h-1zM539 81h1v3h-1zM540 80h1v6h-1zM541 78h1v4h-1zM542 78h1v3h-1zM543 77h1v3h-1zM544 75h1v4h-1zM545 74h1v3h-1zM546 73h1v3h-1zM547 71h1v4h-1zM548 71h1v5h-1zM549 70h1v3h-1zM550 69h1v6h-1zM551 68h1v3h-1zM552 67h1v3h-1zM553 62h1v7h-1zM554 64h1v3h-1zM555 63h1v4h-1zM556 63h1v5h-1zM557 62h1v4h-1zM558 63h1v3h-1zM559 62h1v3h-1zM560 62h1v3h-1zM561 62h1v3h-1zM562 61h1v5h-1zM563 62h1v3h-1zM564 62h1v7h-1zM565 63h1v6h-1zM566 63h1v6h-1zM567 63h1v3h-1zM568 63h1v3h-1zM569 62h1v7h-1zM570 62h1v10h-1zM571 63h1v3h-1zM572 61h1v5h-1zM573 62h1v5h-1zM574 62h1v4h-1zM575 59h1v6h-1zM576 62h1v5h-1zM577 62h1v3h-1zM578 61h1v5h-1zM579 62h1v4h-1zM580 63h1v3h-1zM581 63h1v3h-1zM582 62h1v7h-1zM583 61h1v4h-1zM584 62h1v4h-1zM585 63h1v3h-1zM586 63h1v3h-1zM587 63h1v3h-1zM588 62h1v4h-1zM589 63h1v4h-1zM590 63h1v3h-1zM591 63h1v3h-1zM592 62h1v4h-1zM593 63h1v3h-1zM594 62h1v4h-1zM595 62h1v3h-1zM596 62h1v3h-1zM597 62h1v6h-1zM598 62h1v3h-1zM599 63h1v3h-1zM600 63h1v3h-1zM601 62h1v3h-1zM602 63h1v3h-1zM603 63h1v6h-1zM604 62h1v3h-1zM605 62h1v3h-1zM606 62h1v3h-1zM607 62h1v3h-1zM608 62h1v3h-1zM609 62h1v6h-1zM610 62h1v3h-1zM611 62h1v3h-1zM612 62h1v4h-1zM613 62h1v4h-1zM614 62h1v3h-1zM615 62h1v3h-1zM616 55h1v12h-1zM617 62h1v3h-1zM618 62h1v4h-1zM619 63h1v3h-1zM620 63h1v3h-1zM621 62h1v3h-1zM622 62h1v4h-1zM623 62h1v5h-1zM624 62h1v3h-1zM625 62h1v3h-1zM626 62h1v3h-1zM627 62h1v3h-1zM628 63h1v3h-1zM629 63h1v5h-1zM630 63h1v5h-1zM631 63h1v3h-1zM632 63h1v3h-1zM633 63h1v3h-1zM634 63h1v5h-1zM635 63h1v3h-1zM636 63h1v3h-1zM637 61h1v5h-1zM638 63h1v3h-1zM639 62h1v3h-1zM640 62h1v3h-1zM641 62h1v3h-1zM642 62h1v3h-1zM643 63h1v5h-1zM644 61h1v5h-1zM645 62h1v5h-1zM646 63h1v3h-1zM647 63h1v3h-1zM648 63h1v3h-1zM649 63h1v3h-1zM650 62h1v3h-1zM651 61h1v5h-1zM652 62h1v4h-1zM653 62h1v3h-1zM654 62h1v3h-1zM655 62h1v5h-1zM656 62h1v6h-1zM657 62h1v3h-1zM658 62h1v3h-1zM659 61h1v4h-1zM660 62h1v3h-1zM661 62h1v3h-1zM662 63h1v3h-1zM663 63h1v3h-1zM664 62h1v4h-1zM665 62h1v3h-1zM666 62h1v4h-1zM667 63h1v3h-1zM668 64h1v5h-1zM669 64h1v3h-1zM670 65h1v3h-1zM671 65h1v3h-1zM672 66h1v3h-1zM673 67h1v3h-1zM674 67h1v4h-1zM675 68h1v3h-1zM676 68h1v4h-1zM677 69h1v4h-1zM678 70h1v3h-1zM679 71h1v3h-1zM680 72h1v3h-1zM681 73h1v4h-1zM682 75h1v3h-1zM683 76h1v3h-1zM684 77h1v3h-1zM685 78h1v7h-1zM686 80h1v3h-1zM687 81h1v6h-1zM688 82h1v3h-1zM689 83h1v4h-1zM690 85h1v4h-1zM691 85h1v3h-1zM692 83h1v4h-1z" fill="#34dce8"/>
<path d="M21 216h1v2h-1zM22 215h1v3h-1zM23 214h1v3h-1zM24 214h1v2h-1zM25 212h1v3h-1zM26 211h1v3h-1zM27 211h1v2h-1zM28 209h1v3h-1zM29 209h1v2h-1zM30 208h1v2h-1zM31 208h1v2h-1zM32 207h1v2h-1zM33 207h1v2h-1zM34 206h1v3h-1zM35 205h1v3h-1zM36 204h1v2h-1zM37 204h1v8h-1zM38 202h1v3h-1zM39 201h1v3h-1zM40 201h1v2h-1zM41 199h1v3h-1zM42 198h1v11h-1zM43 197h1v3h-1zM44 196h1v3h-1zM45 196h1v2h-1zM46 195h1v3h-1zM47 195h1v2h-1zM48 194h1v3h-1zM49 193h1v3h-1zM50 192h1v3h-1zM51 191h1v3h-1zM52 190h1v3h-1zM53 190h1v2h-1zM54 190h1v2h-1zM55 189h1v3h-1zM56 189h1v2h-1zM57 187h1v3h-1zM58 186h1v3h-1zM59 185h1v3h-1zM60 184h1v3h-1zM61 184h1v2h-1zM62 183h1v2h-1zM63 183h1v6h-1zM64 182h1v2h-1zM65 181h1v3h-1zM66 180h1v3h-1zM67 179h1v3h-1zM68 178h1v2h-1zM69 177h1v2h-1zM70 177h1v2h-1zM71 176h1v2h-1zM72 174h1v3h-1zM73 173h1v3h-1zM74 172h1v3h-1zM75 171h1v3h-1zM76 170h1v3h-1zM77 170h1v2h-1zM78 170h1v2h-1zM79 158h1v13h-1zM80 169h1v2h-1zM81 168h1v2h-1zM82 167h1v3h-1zM83 166h1v3h-1zM84 165h1v2h-1zM85 165h1v2h-1zM86 157h1v10h-1zM87 163h1v3h-1zM88 162h1v3h-1zM89 161h1v3h-1zM90 161h1v2h-1zM91 159h1v3h-1zM92 159h1v2h-1zM93 158h1v3h-1zM94 157h1v3h-1zM95 156h1v2h-1zM96 156h1v2h-1zM97 155h1v2h-1zM98 154h1v3h-1zM99 153h1v3h-1zM100 152h1v3h-1zM101 152h1v2h-1zM102 150h1v3h-1zM103 150h1v2h-1zM104 149h1v3h-1zM105 148h1v3h-1zM106 147h1v3h-1zM107 147h1v2h-1zM108 145h1v3h-1zM109 145h1v2h-1zM110 145h1v2h-1zM111 144h1v3h-1zM112 144h1v2h-1zM113 135h1v10h-1zM114 141h1v3h-1zM115 141h1v2h-1zM116 140h1v3h-1zM117 139h1v3h-1zM118 138h1v3h-1zM119 137h1v3h-1zM120 136h1v3h-1zM121 135h1v3h-1zM122 135h1v2h-1zM123 134h1v3h-1zM124 133h1v3h-1zM125 133h1v2h-1zM126 132h1v3h-1zM127 131h1v3h-1zM128 130h1v3h-1zM129 130h1v2h-1zM130 129h1v2h-1zM131 128h1v3h-1zM132 127h1v3h-1zM133 126h1v3h-1zM134 126h1v2h-1zM135 125h1v3h-1zM136 124h1v9h-1zM137 124h1v2h-1zM138 122h1v3h-1zM139 122h1v2h-1zM140 120h1v3h-1zM141 119h1v3h-1zM142 118h1v3h-1zM143 117h1v3h-1zM144 116h1v3h-1zM145 116h1v2h-1zM146 115h1v2h-1zM147 114h1v3h-1zM148 113h1v3h-1zM149 113h1v2h-1zM150 113h1v2h-1zM151 112h1v2h-1zM152 111h1v3h-1zM153 111h1v2h-1zM154 109h1v3h-1zM155 108h1v3h-1zM156 108h1v2h-1zM157 107h1v6h-1zM158 106h1v3h-1zM159 106h1v2h-1zM160 105h1v2h-1zM161 103h1v4h-1zM162 103h1v2h-1zM163 102h1v3h-1zM164 101h1v2h-1zM165 99h1v3h-1zM166 99h1v2h-1zM167 100h1v2h-1zM168 97h1v7h-1zM169 102h1v3h-1zM170 103h1v2h-1zM171 104h1v3h-1zM172 105h1v3h-1zM173 106h1v3h-1zM174 107h1v3h-1zM175 108h1v3h-1zM176 109h1v2h-1zM177 109h1v3h-1zM178 110h1v3h-1zM179 111h1v9h-1zM180 111h1v8h-1zM181 113h1v2h-1zM182 113h1v3h-1zM183 114h1v3h-1zM184 115h1v6h-1zM185 109h1v13h-1zM186 117h1v3h-1zM187 118h1v3h-1zM188 119h1v2h-1zM189 120h1v2h-1zM190 121h1v2h-1zM191 121h1v2h-1zM192 121h1v2h-1zM193 122h1v2h-1zM194 123h1v2h-1zM195 124h1v2h-1zM196 124h1v2h-1zM197 125h1v2h-1zM198 125h1v4h-1zM199 127h1v3h-1zM200 129h1v3h-1zM201 130h1v3h-1zM202 131h1v3h-1zM203 132h1v3h-1zM204 132h1v2h-1zM205 128h1v6h-1zM206 133h1v3h-1zM207 134h1v3h-1zM208 135h1v2h-1zM209 136h1v2h-1zM210 137h1v3h-1zM211 138h1v2h-1zM212 138h1v3h-1zM213 139h1v3h-1zM214 140h1v3h-1zM215 136h1v7h-1zM216 141h1v2h-1zM217 142h1v3h-1zM218 143h1v2h-1zM219 143h1v3h-1zM220 144h1v2h-1zM221 145h1v2h-1zM222 146h1v3h-1zM223 147h1v2h-1zM224 148h1v3h-1zM225 149h1v3h-1zM226 150h1v3h-1zM227 151h1v2h-1zM228 151h1v3h-1zM229 147h1v8h-1zM230 153h1v2h-1zM231 154h1v2h-1zM232 155h1v2h-1zM233 155h1v2h-1zM234 156h1v3h-1zM235 157h1v3h-1zM236 158h1v2h-1zM237 159h1v3h-1zM238 160h1v2h-1zM239 160h1v3h-1zM240 161h1v3h-1zM241 162h1v3h-1zM242 163h1v3h-1zM243 164h1v3h-1zM244 165h1v3h-1zM245 166h1v2h-1zM246 166h1v2h-1zM247 166h1v4h-1zM248 168h1v2h-1zM249 168h1v3h-1zM250 169h1v3h-1zM251 170h1v2h-1zM252 171h1v2h-1zM253 172h1v3h-1zM254 173h1v3h-1zM255 174h1v3h-1zM256 175h1v3h-1zM257 176h1v3h-1zM258 177h1v2h-1zM259 177h1v3h-1zM260 178h1v2h-1zM261 179h1v8h-1zM262 180h1v2h-1zM263 180h1v9h-1zM264 181h1v2h-1zM265 182h1v2h-1zM266 182h1v2h-1zM267 183h1v2h-1zM268 184h1v2h-1zM269 185h1v2h-1zM270 185h1v3h-1zM271 186h1v3h-1zM272 187h1v4h-1zM273 189h1v2h-1zM274 190h1v3h-1zM275 190h1v2h-1zM276 191h1v3h-1zM277 192h1v2h-1zM278 192h1v3h-1zM279 193h1v3h-1zM280 194h1v3h-1zM281 195h1v2h-1zM282 195h1v3h-1zM283 197h1v3h-1zM284 198h1v2h-1zM285 199h1v3h-1zM286 200h1v2h-1zM287 200h1v3h-1zM288 202h1v2h-1zM289 202h1v2h-1zM290 203h1v2h-1zM291 203h1v3h-1zM292 204h1v2h-1zM293 205h1v11h-1zM294 206h1v2h-1zM295 207h1v3h-1zM296 208h1v3h-1zM297 209h1v2h-1zM298 210h1v3h-1zM299 210h1v3h-1zM300 211h1v2h-1zM301 211h1v3h-1zM302 212h1v3h-1zM303 213h1v2h-1zM304 213h1v9h-1zM305 214h1v3h-1zM306 215h1v3h-1zM307 216h1v3h-1zM308 217h1v3h-1zM309 218h1v3h-1zM310 219h1v2h-1zM311 220h1v3h-1zM312 221h1v2h-1zM313 221h1v3h-1zM314 221h1v2h-1zM315 220h1v3h-1zM316 220h1v2h-1zM317 219h1v3h-1zM318 219h1v2h-1zM319 218h1v2h-1zM320 217h1v3h-1zM321 216h1v3h-1zM322 215h1v2h-1zM323 214h1v2h-1zM324 212h1v3h-1zM325 212h1v2h-1zM326 212h1v2h-1zM327 211h1v2h-1zM328 210h1v3h-1zM329 209h1v2h-1zM330 208h1v3h-1zM331 207h1v3h-1zM332 207h1v2h-1zM333 206h1v2h-1zM334 206h1v6h-1zM335 205h1v2h-1zM336 204h1v2h-1zM337 203h1v5h-1zM338 202h1v3h-1zM339 201h1v3h-1zM340 200h1v3h-1zM341 200h1v2h-1zM342 199h1v3h-1zM343 198h1v3h-1zM344 197h1v2h-1zM345 197h1v2h-1zM346 196h1v2h-1zM347 195h1v2h-1zM348 194h1v3h-1zM349 194h1v2h-1zM350 192h1v3h-1zM351 192h1v2h-1zM352 191h1v3h-1zM353 190h1v3h-1zM354 189h1v3h-1zM355 188h1v2h-1zM356 187h1v2h-1zM357 186h1v2h-1zM358 185h1v3h-1zM359 184h1v3h-1zM360 184h1v2h-1zM361 183h1v3h-1zM362 182h1v3h-1zM363 182h1v2h-1zM364 181h1v8h-1zM365 180h1v3h-1zM366 180h1v2h-1zM367 179h1v3h-1zM368 177h1v3h-1zM369 177h1v3h-1zM370 176h1v3h-1zM371 175h1v3h-1zM372 174h1v3h-1zM373 173h1v3h-1zM374 173h1v2h-1zM375 173h1v2h-1zM376 171h1v3h-1zM377 170h1v3h-1zM378 170h1v3h-1zM379 169h1v8h-1zM380 169h1v2h-1zM381 167h1v3h-1zM382 166h1v3h-1zM383 166h1v2h-1zM384 159h1v9h-1zM385 165h1v2h-1zM386 164h1v7h-1zM387 163h1v2h-1zM388 162h1v3h-1zM389 161h1v2h-1zM390 161h1v2h-1zM391 159h1v3h-1zM392 159h1v2h-1zM393 158h1v2h-1zM394 158h1v2h-1zM395 156h1v3h-1zM396 155h1v3h-1zM397 154h1v3h-1zM398 153h1v3h-1zM399 152h1v3h-1zM400 152h1v2h-1zM401 151h1v2h-1zM402 151h1v2h-1zM403 149h1v3h-1zM404 149h1v8h-1zM405 149h1v2h-1zM406 148h1v2h-1zM407 147h1v3h-1zM408 146h1v3h-1zM409 144h1v3h-1zM410 144h1v3h-1zM411 144h1v2h-1zM412 143h1v2h-1zM413 142h1v2h-1zM414 141h1v2h-1zM415 140h1v2h-1zM416 140h1v2h-1zM417 139h1v3h-1zM418 138h1v3h-1zM419 137h1v2h-1zM420 136h1v2h-1zM421 136h1v2h-1zM422 135h1v2h-1zM423 134h1v2h-1zM424 133h1v3h-1zM425 132h1v3h-1zM426 131h1v2h-1zM427 131h1v2h-1zM428 129h1v3h-1zM429 129h1v2h-1zM430 128h1v3h-1zM431 128h1v2h-1zM432 127h1v3h-1zM433 127h1v2h-1zM434 126h1v2h-1zM435 125h1v2h-1zM436 124h1v2h-1zM437 123h1v2h-1zM438 122h1v2h-1zM439 121h1v3h-1zM440 120h1v3h-1zM441 119h1v3h-1zM442 118h1v2h-1zM443 117h1v7h-1zM444 117h1v2h-1zM445 116h1v3h-1zM446 116h1v2h-1zM447 114h1v3h-1zM448 114h1v2h-1zM449 113h1v3h-1zM450 112h1v3h-1zM451 112h1v2h-1zM452 111h1v2h-1zM453 111h1v2h-1zM454 110h1v2h-1zM455 109h1v3h-1zM456 109h1v2h-1zM457 108h1v2h-1zM458 106h1v3h-1zM459 106h1v2h-1zM460 104h1v3h-1zM461 103h1v3h-1zM462 102h1v9h-1zM463 101h1v2h-1zM464 101h1v2h-1zM465 100h1v3h-1zM466 97h1v6h-1zM467 102h1v2h-1zM468 102h1v9h-1zM469 103h1v2h-1zM470 104h1v3h-1zM471 105h1v6h-1zM472 105h1v4h-1zM473 107h1v2h-1zM474 108h1v2h-1zM475 108h1v3h-1zM476 109h1v2h-1zM477 109h1v6h-1zM478 110h1v2h-1zM479 111h1v9h-1zM480 112h1v2h-1zM481 113h1v2h-1zM482 114h1v2h-1zM483 115h1v3h-1zM484 116h1v2h-1zM485 117h1v2h-1zM486 117h1v2h-1zM487 112h1v8h-1zM488 118h1v3h-1zM489 119h1v3h-1zM490 120h1v2h-1zM491 121h1v2h-1zM492 121h1v4h-1zM493 123h1v3h-1zM494 124h1v2h-1zM495 124h1v3h-1zM496 126h1v2h-1zM497 126h1v3h-1zM498 127h1v3h-1zM499 129h1v2h-1zM500 129h1v2h-1zM501 130h1v2h-1zM502 130h1v3h-1zM503 131h1v2h-1zM504 125h1v14h-1zM505 132h1v4h-1zM506 134h1v2h-1zM507 130h1v7h-1zM508 135h1v3h-1zM509 137h1v2h-1zM510 137h1v2h-1zM511 137h1v3h-1zM512 132h1v8h-1zM513 139h1v2h-1zM514 140h1v2h-1zM515 140h1v3h-1zM516 141h1v3h-1zM517 143h1v2h-1zM518 138h1v9h-1zM519 145h1v2h-1zM520 145h1v3h-1zM521 146h1v3h-1zM522 147h1v2h-1zM523 148h1v2h-1zM524 149h1v2h-1zM525 149h1v2h-1zM526 150h1v5h-1zM527 151h1v2h-1zM528 152h1v3h-1zM529 153h1v2h-1zM530 153h1v3h-1zM531 155h1v2h-1zM532 156h1v2h-1zM533 156h1v2h-1zM534 157h1v2h-1zM535 157h1v3h-1zM536 158h1v3h-1zM537 160h1v2h-1zM538 160h1v3h-1zM539 162h1v2h-1zM540 162h1v2h-1zM541 163h1v8h-1zM542 163h1v3h-1zM543 164h1v3h-1zM544 165h1v2h-1zM545 166h1v2h-1zM546 166h1v4h-1zM547 168h1v3h-1zM548 169h1v3h-1zM549 170h1v6h-1zM550 171h1v3h-1zM551 172h1v3h-1zM552 173h1v2h-1zM553 173h1v3h-1zM554 174h1v3h-1zM555 175h1v2h-1zM556 175h1v2h-1zM557 175h1v3h-1zM558 176h1v3h-1zM559 178h1v2h-1zM560 178h1v3h-1zM561 179h1v2h-1zM562 180h1v3h-1zM563 181h1v7h-1zM564 182h1v3h-1zM565 183h1v2h-1zM566 178h1v8h-1zM567 184h1v3h-1zM568 185h1v3h-1zM569 186h1v2h-1zM570 186h1v3h-1zM571 187h1v3h-1zM572 188h1v3h-1zM573 189h1v3h-1zM574 190h1v2h-1zM575 191h1v3h-1zM576 192h1v3h-1zM577 193h1v2h-1zM578 194h1v2h-1zM579 194h1v3h-1zM580 196h1v2h-1zM581 196h1v2h-1zM582 196h1v3h-1zM583 197h1v3h-1zM584 198h1v2h-1zM585 199h1v2h-1zM586 199h1v3h-1zM587 201h1v7h-1zM588 202h1v2h-1zM589 203h1v2h-1zM590 203h1v3h-1zM591 205h1v2h-1zM592 205h1v2h-1zM593 205h1v3h-1zM594 206h1v2h-1zM595 207h1v2h-1zM596 208h1v2h-1zM597 208h1v3h-1zM598 210h1v2h-1zM599 211h1v7h-1zM600 211h1v2h-1zM601 211h1v3h-1zM602 213h1v2h-1zM603 213h1v3h-1zM604 214h1v3h-1zM605 215h1v2h-1zM606 216h1v2h-1zM607 216h1v3h-1zM608 217h1v4h-1zM609 219h1v2h-1zM610 220h1v3h-1zM611 220h1v2h-1zM612 221h1v3h-1zM613 222h1v6h-1zM614 222h1v2h-1zM615 221h1v2h-1zM616 220h1v2h-1zM617 220h1v2h-1zM618 219h1v2h-1zM619 218h1v2h-1zM620 217h1v3h-1zM621 215h1v3h-1zM622 215h1v2h-1zM623 214h1v3h-1zM624 213h1v3h-1zM625 213h1v2h-1zM626 212h1v2h-1zM627 211h1v2h-1zM628 210h1v3h-1zM629 209h1v3h-1zM630 209h1v2h-1zM631 208h1v7h-1zM632 205h1v5h-1zM633 207h1v2h-1zM634 206h1v3h-1zM635 204h1v3h-1zM636 203h1v7h-1zM637 197h1v8h-1zM638 202h1v3h-1zM639 201h1v3h-1zM640 200h1v9h-1zM641 200h1v3h-1zM642 200h1v2h-1zM643 199h1v2h-1zM644 197h1v3h-1zM645 196h1v3h-1zM646 196h1v2h-1zM647 194h1v3h-1zM648 194h1v2h-1zM649 193h1v3h-1zM650 192h1v3h-1zM651 191h1v3h-1zM652 191h1v2h-1zM653 190h1v3h-1zM654 189h1v3h-1zM655 189h1v2h-1zM656 187h1v3h-1zM657 187h1v2h-1zM658 187h1v2h-1zM659 186h1v2h-1zM660 185h1v2h-1zM661 185h1v2h-1zM662 183h1v3h-1zM663 183h1v2h-1zM664 182h1v2h-1zM665 181h1v2h-1zM666 180h1v3h-1zM667 180h1v7h-1zM668 179h1v3h-1zM669 178h1v2h-1zM670 178h1v2h-1zM671 176h1v3h-1zM672 176h1v2h-1zM673 175h1v3h-1zM674 175h1v2h-1zM675 174h1v2h-1zM676 172h1v9h-1zM677 172h1v2h-1zM678 170h1v3h-1zM679 169h1v3h-1zM680 168h1v3h-1zM681 168h1v2h-1zM682 168h1v2h-1zM683 166h1v3h-1zM684 166h1v2h-1zM685 165h1v2h-1zM686 165h1v2h-1zM687 164h1v2h-1zM688 163h1v3h-1zM689 159h1v6h-1zM690 161h1v2h-1zM691 160h1v2h-1zM692 159h1v3h-1z" fill="#f2f22c"/>
<rect x="441" y="0" width="1" height="1" fill="#405080"/><rect x="442" y="0" width="1" height="1" fill="#202040"/><rect x="443" y="0" width="1" height="1" fill="#a04020"/><rect x="444" y="0" width="1" height="1" fill="#d0d0e0"/><rect x="446" y="0" width="1" height="1" fill="#c08040"/><rect x="447" y="0" width="1" height="1" fill="#60c080"/><rect x="449" y="0" width="1" height="1" fill="#f0e0a0"/><rect x="451" y="0" width="1" height="1" fill="#80c0c0"/><rect x="452" y="0" width="1" height="1" fill="#202040"/><rect x="453" y="0" width="1" height="1" fill="#f0e0a0"/><rect x="454" y="0" width="1" height="1" fill="#405080"/><rect x="455" y="0" width="1" height="1" fill="#80c0c0"/><rect x="457" y="0" width="1" height="1" fill="#c08040"/><rect x="458" y="0" width="1" height="1" fill="#101030"/><rect x="459" y="0" width="1" height="1" fill="#60a0a0"/><rect x="460" y="0" width="1" height="1" fill="#101030"/><rect x="461" y="0" width="1" height="1" fill="#c0a060"/><rect x="462" y="0" width="1" height="1" fill="#c06080"/><rect x="463" y="0" width="1" height="1" fill="#405080"/><rect x="466" y="0" width="1" height="1" fill="#405080"/><rect x="467" y="0" width="1" height="1" fill="#60a0a0"/><rect x="468" y="0" width="1" height="1" fill="#a04020"/><rect x="469" y="0" width="1" height="1" fill="#60c080"/><rect x="473" y="0" width="1" height="1" fill="#80c0c0"/><rect x="474" y="0" width="1" height="1" fill="#60c080"/><rect x="475" y="0" width="1" height="1" fill="#ffffff"/><rect x="476" y="0" width="1" height="1" fill="#60c080"/><rect x="477" y="0" width="1" height="1" fill="#8090c0"/><rect x="478" y="0" width="1" height="1" fill="#e0e0ff"/><rect x="479" y="0" width="1" height="1" fill="#c06080"/><rect x="481" y="0" width="1" height="1" fill="#ffffff"/><rect x="482" y="0" width="1" height="1" fill="#60c080"/><rect x="483" y="0" width="1" height="1" fill="#60a0a0"/><rect x="484" y="0" width="1" height="1" fill="#60c080"/><rect x="489" y="0" width="1" height="1" fill="#80c0c0"/><rect x="490" y="0" width="1" height="1" fill="#202040"/><rect x="492" y="0" width="1" height="1" fill="#e0e0ff"/><rect x="493" y="0" width="1" height="1" fill="#80c0c0"/><rect x="494" y="0" width="1" height="1" fill="#60c080"/><rect x="495" y="0" width="1" height="1" fill="#c06080"/><rect x="496" y="0" width="1" height="1" fill="#c0a060"/><rect x="497" y="0" width="1" height="1" fill="#e09050"/><rect x="498" y="0" width="1" height="1" fill="#202040"/><rect x="499" y="0" width="1" height="1" fill="#80c0c0"/><rect x="500" y="0" width="1" height="1" fill="#60c080"/><rect x="501" y="0" width="1" height="1" fill="#f0e0a0"/><rect x="502" y="0" width="1" height="1" fill="#e0e0ff"/><rect x="503" y="0" width="1" height="1" fill="#a04020"/><rect x="504" y="0" width="1" height="1" fill="#a04020"/><rect x="505" y="0" width="1" height="1" fill="#d0d0e0"/><rect x="506" y="0" width="1" height="1" fill="#c0a060"/><rect x="508" y="0" width="1" height="1" fill="#101030"/><rect x="509" y="0" width="1" height="1" fill="#f0e0a0"/><rect x="510" y="0" width="1" height="1" fill="#e09050"/><rect x="511" y="0" width="1" height="1" fill="#e09050"/><rect x="512" y="0" width="1" height="1" fill="#e0e0ff"/><rect x="515" y="0" width="1" height="1" fill="#101030"/><rect x="516" y="0" width="1" height="1" fill="#c06080"/><rect x="517" y="0" width="1" height="1" fill="#8090c0"/><rect x="519" y="0" width="1" height="1" fill="#101030"/><rect x="521" y="0" width="1" height="1" fill="#ffffff"/><rect x="522" y="0" width="1" height="1" fill="#f0e0a0"/><rect x="523" y="0" width="1" height="1" fill="#c0a060"/><rect x="524" y="0" width="1" height="1" fill="#80c0c0"/><rect x="525" y="0" width="1" height="1" fill="#202040"/><rect x="526" y="0" width="1" height="1" fill="#ffffff"/><rect x="529" y="0" width="1" height="1" fill="#80c0c0"/><rect x="530" y="0" width="1" height="1" fill="#80c0c0"/><rect x="531" y="0" width="1" height="1" fill="#405080"/><rect x="534" y="0" width="1" height="1" fill="#80c0c0"/><rect x="535" y="0" width="1" height="1" fill="#c08040"/><rect x="536" y="0" width="1" height="1" fill="#c0a060"/><rect x="537" y="0" width="1" height="1" fill="#405080"/><rect x="538" y="0" width="1" height="1" fill="#80c0c0"/><rect x="539" y="0" width="1" height="1" fill="#101030"/><rect x="540" y="0" width="1" height="1" fill="#202040"/><rect x="541" y="0" width="1" height="1" fill="#c08040"/><rect x="542" y="0" width="1" height="1" fill="#c08040"/><rect x="543" y="0" width="1" height="1" fill="#d0d0e0"/><rect x="544" y="0" width="1" height="1" fill="#c0a060"/><rect x="545" y="0" width="1" height="1" fill="#e09050"/><rect x="546" y="0" width="1" height="1" fill="#e09050"/><rect x="547" y="0" width="1" height="1" fill="#c06080"/><rect x="548" y="0" width="1" height="1" fill="#80c0c0"/><rect x="549" y="0" width="1" height="1" fill="#e09050"/><rect x="550" y="0" width="1" height="1" fill="#60c080"/><rect x="551" y="0" width="1" height="1" fill="#60c080"/><rect x="552" y="0" width="1" height="1" fill="#e09050"/><rect x="553" y="0" width="1" height="1" fill="#e0e0ff"/><rect x="554" y="0" width="1" height="1" fill="#c0a060"/><rect x="555" y="0" width="1" height="1" fill="#f0e0a0"/><rect x="556" y="0" width="1" height="1" fill="#202040"/><rect x="557" y="0" width="1" height="1" fill="#60c080"/><rect x="558" y="0" width="1" height="1" fill="#101030"/><rect x="559" y="0" width="1" height="1" fill="#202040"/><rect x="560" y="0" width="1" height="1" fill="#d0d0e0"/><rect x="561" y="0" width="1" height="1" fill="#d0d0e0"/><rect x="563" y="0" width="1" height="1" fill="#405080"/><rect x="565" y="0" width="1" height="1" fill="#405080"/><rect x="567" y="0" width="1" height="1" fill="#e0e0ff"/><rect x="568" y="0" width="1" height="1" fill="#ffffff"/><rect x="569" y="0" width="1" height="1" fill="#60a0a0"/><rect x="570" y="0" width="1" height="1" fill="#e0e0ff"/><rect x="572" y="0" width="1" height="1" fill="#c0a060"/><rect x="573" y="0" width="1" height="1" fill="#a04020"/><rect x="574" y="0" width="1" height="1" fill="#60a0a0"/><rect x="575" y="0" width="1" height="1" fill="#c06080"/><rect x="576" y="0" width="1" height="1" fill="#202040"/><rect x="577" y="0" width="1" height="1" fill="#60c080"/><rect x="578" y="0" width="1" height="1" fill="#e0e0ff"/><rect x="580" y="0" width="1" height="1" fill="#ffffff"/><rect x="581" y="0" width="1" height="1" fill="#d0d0e0"/><rect x="582" y="0" width="1" height="1" fill="#f0e0a0"/><rect x="583" y="0" width="1" height="1" fill="#60a0a0"/><rect x="584" y="0" width="1" height="1" fill="#ffffff"/><rect x="585" y="0" width="1" height="1" fill="#c06080"/><rect x="586" y="0" width="1" height="1" fill="#60c080"/><rect x="588" y="0" width="1" height="1" fill="#60c080"/><rect x="589" y="0" width="1" height="1" fill="#8090c0"/><rect x="590" y="0" width="1" height="1" fill="#e09050"/><rect x="591" y="0" width="1" height="1" fill="#e0e0ff"/><rect x="592" y="0" width="1" height="1" fill="#405080"/><rect x="593" y="0" width="1" height="1" fill="#d0d0e0"/><rect x="594" y="0" width="1" height="1" fill="#ffffff"/><rect x="595" y="0" width="1" height="1" fill="#c06080"/><rect x="596" y="0" width="1" height="1" fill="#202040"/><rect x="597" y="0" width="1" height="1" fill="#c08040"/><rect x="598" y="0" width="1" height="1" fill="#c06080"/><rect x="599" y="0" width="1" height="1" fill="#c06080"/><rect x="601" y="0" width="1" height="1" fill="#60c080"/><rect x="602" y="0" width="1" height="1" fill="#f0e0a0"/><rect x="603" y="0" width="1" height="1" fill="#202040"/><rect x="604" y="0" width="1" height="1" fill="#f0e0a0"/><rect x="605" y="0" width="1" height="1" fill="#e09050"/><rect x="606" y="0" width="1" height="1" fill="#ffffff"/><rect x="607" y="0" width="1" height="1" fill="#405080"/><rect x="608" y="0" width="1" height="1" fill="#101030"/><rect x="609" y="0" width="1" height="1" fill="#c06080"/><rect x="610" y="0" width="1" height="1" fill="#101030"/><rect x="612" y="0" width="1" height="1" fill="#60c080"/><rect x="613" y="0" width="1" height="1" fill="#405080"/><rect x="614" y="0" width="1" height="1" fill="#a04020"/><rect x="617" y="0" width="1" height="1" fill="#c06080"/><rect x="618" y="0" width="1" height="1" fill="#80c0c0"/><rect x="620" y="0" width="1" height="1" fill="#101030"/><rect x="621" y="0" width="1" height="1" fill="#60a0a0"/><rect x="622" y="0" width="1" height="1" fill="#405080"/><rect x="623" y="0" width="1" height="1" fill="#80c0c0"/><rect x="624" y="0" width="1" height="1" fill="#202040"/><rect x="625" y="0" width="1" height="1" fill="#ffffff"/><rect x="626" y="0" width="1" height="1" fill="#f0e0a0"/><rect x="627" y="0" width="1" height="1" fill="#f0e0a0"/><rect x="629" y="0" width="1" height="1" fill="#c08040"/><rect x="630" y="0" width="1" height="1" fill="#f0e0a0"/><rect x="631" y="0" width="1" height="1" fill="#a04020"/><rect x="632" y="0" width="1" height="1" fill="#405080"/><rect x="633" y="0" width="1" height="1" fill="#8090c0"/><rect x="634" y="0" width="1" height="1" fill="#202040"/><rect x="635" y="0" width="1" height="1" fill="#60c080"/><rect x="636" y="0" width="1" height="1" fill="#c08040"/><rect x="638" y="0" width="1" height="1" fill="#a04020"/><rect x="639" y="0" width="1" height="1" fill="#80c0c0"/><rect x="640" y="0" width="1" height="1" fill="#8090c0"/><rect x="641" y="0" width="1" height="1" fill="#202040"/><rect x="642" y="0" width="1" height="1" fill="#e0e0ff"/><rect x="643" y="0" width="1" height="1" fill="#60c080"/><rect x="644" y="0" width="1" height="1" fill="#60a0a0"/><rect x="645" y="0" width="1" height="1" fill="#202040"/><rect x="646" y="0" width="1" height="1" fill="#80c0c0"/><rect x="647" y="0" width="1" height="1" fill="#80c0c0"/><rect x="649" y="0" width="1" height="1" fill="#405080"/><rect x="650" y="0" width="1" height="1" fill="#8090c0"/><rect x="651" y="0" width="1" height="1" fill="#80c0c0"/><rect x="652" y="0" width="1" height="1" fill="#80c0c0"/><rect x="654" y="0" width="1" height="1" fill="#e0e0ff"/><rect x="655" y="0" width="1" height="1" fill="#e09050"/><rect x="656" y="0" width="1" height="1" fill="#e0e0ff"/><rect x="658" y="0" width="1" height="1" fill="#60c080"/><rect x="659" y="0" width="1" height="1" fill="#60a0a0"/><rect x="660" y="0" width="1" height="1" fill="#e09050"/><rect x="661" y="0" width="1" height="1" fill="#d0d0e0"/><rect x="663" y="0" width="1" height="1" fill="#a04020"/><rect x="664" y="0" width="1" height="1" fill="#c06080"/><rect x="665" y="0" width="1" height="1" fill="#c08040"/><rect x="667" y="0" width="1" height="1" fill="#80c0c0"/><rect x="668" y="0" width="1" height="1" fill="#80c0c0"/><rect x="669" y="0" width="1" height="1" fill="#60c080"/><rect x="670" y="0" width="1" height="1" fill="#60c080"/><rect x="671" y="0" width="1" height="1" fill="#101030"/><rect x="672" y="0" width="1" height="1" fill="#e09050"/><rect x="673" y="0" width="1" height="1" fill="#60a0a0"/><rect x="674" y="0" width="1" height="1" fill="#e09050"/><rect x="675" y="0" width="1" height="1" fill="#ffffff"/><rect x="676" y="0" width="1" height="1" fill="#d0d0e0"/><rect x="677" y="0" width="1" height="1" fill="#60c080"/><rect x="678" y="0" width="1" height="1" fill="#60a0a0"/><rect x="679" y="0" width="1" height="1" fill="#a04020"/><rect x="680" y="0" width="1" height="1" fill="#60c080"/><rect x="681" y="0" width="1" height="1" fill="#80c0c0"/><rect x="682" y="0" width="1" height="1" fill="#c0a060"/><rect x="683" y="0" width="1" height="1" fill="#f0e0a0"/><rect x="684" y="0" width="1" height="1" fill="#ffffff"/><rect x="685" y="0" width="1" height="1" fill="#101030"/><rect x="686" y="0" width="1" height="1" fill="#60a0a0"/><rect x="688" y="0" width="1" height="1" fill="#e0e0ff"/><rect x="689" y="0" width="1" height="1" fill="#ffffff"/><rect x="690" y="0" width="1" height="1" fill="#c0a060"/><rect x="691" y="0" width="1" height="1" fill="#101030"/><rect x="692" y="0" width="1" height="1" fill="#80c0c0"/><rect x="693" y="0" width="1" height="1" fill="#ffffff"/><rect x="695" y="0" width="1" height="1" fill="#f0a040"/><rect x="696" y="0" width="1" height="1" fill="#f0a040"/><rect x="698" y="0" width="1" height="1" fill="#f0a040"/><rect x="699" y="0" width="1" height="1" fill="#f0a040"/><rect x="700" y="0" width="1" height="1" fill="#c06020"/><rect x="701" y="0" width="1" height="1" fill="#c06020"/><rect x="702" y="0" width="1" height="1" fill="#f0a040"/><rect x="705" y="0" width="1" height="1" fill="#f0d080"/><rect x="706" y="0" width="1" height="1" fill="#80a030"/><rect x="707" y="0" width="1" height="1" fill="#602010"/><rect x="708" y="0" width="1" height="1" fill="#f0a040"/><rect x="710" y="0" width="1" height="1" fill="#c06020"/><rect x="711" y="0" width="1" height="1" fill="#602010"/><rect x="712" y="0" width="1" height="1" fill="#e0c060"/><rect x="713" y="0" width="1" height="1" fill="#80a030"/><rect x="714" y="0" width="1" height="1" fill="#80a030"/><rect x="715" y="0" width="1" height="1" fill="#c06020"/><rect x="717" y="0" width="1" height="1" fill="#d08040"/><rect x="718" y="0" width="1" height="1" fill="#602010"/><rect x="720" y="0" width="1" height="1" fill="#c06020"/><rect x="721" y="0" width="1" height="1" fill="#d08040"/><rect x="722" y="0" width="1" height="1" fill="#f0a040"/><rect x="723" y="0" width="1" height="1" fill="#f0d080"/><rect x="724" y="0" width="1" height="1" fill="#602010"/><rect x="725" y="0" width="1" height="1" fill="#d08040"/><rect x="726" y="0" width="1" height="1" fill="#d08040"/><rect x="728" y="0" width="1" height="1" fill="#e0c060"/><rect x="729" y="0" width="1" height="1" fill="#c06020"/><rect x="730" y="0" width="1" height="1" fill="#80a030"/><rect x="731" y="0" width="1" height="1" fill="#602010"/><rect x="732" y="0" width="1" height="1" fill="#d08040"/><rect x="733" y="0" width="1" height="1" fill="#f0d080"/><rect x="734" y="0" width="1" height="1" fill="#c06020"/><rect x="735" y="0" width="1" height="1" fill="#e0c060"/><rect x="736" y="0" width="1" height="1" fill="#f0d080"/><rect x="737" y="0" width="1" height="1" fill="#f0a040"/><rect x="738" y="0" width="1" height="1" fill="#80a030"/><rect x="739" y="0" width="1" height="1" fill="#602010"/><rect x="740" y="0" width="1" height="1" fill="#c06020"/><rect x="741" y="0" width="1" height="1" fill="#e0c060"/><rect x="742" y="0" width="1" height="1" fill="#d08040"/><rect x="744" y="0" width="1" height="1" fill="#602010"/><rect x="746" y="0" width="1" height="1" fill="#80a030"/><rect x="747" y="0" width="1" height="1" fill="#e0c060"/><rect x="748" y="0" width="1" height="1" fill="#f0a040"/><rect x="749" y="0" width="1" height="1" fill="#e0c060"/><rect x="751" y="0" width="1" height="1" fill="#c06020"/><rect x="752" y="0" width="1" height="1" fill="#602010"/><rect x="753" y="0" width="1" height="1" fill="#c06020"/><rect x="754" y="0" width="1" height="1" fill="#e0c060"/><rect x="756" y="0" width="1" height="1" fill="#80a030"/><rect x="757" y="0" width="1" height="1" fill="#d08040"/><rect x="758" y="0" width="1" height="1" fill="#602010"/><rect x="759" y="0" width="1" height="1" fill="#e0c060"/><rect x="760" y="0" width="1" height="1" fill="#602010"/><rect x="761" y="0" width="1" height="1" fill="#602010"/><rect x="762" y="0" width="1" height="1" fill="#c06020"/><rect x="763" y="0" width="1" height="1" fill="#f0d080"/><rect x="764" y="0" width="1" height="1" fill="#80a030"/><rect x="765" y="0" width="1" height="1" fill="#d08040"/><rect x="766" y="0" width="1" height="1" fill="#f0a040"/><rect x="767" y="0" width="1" height="1" fill="#d08040"/><rect x="768" y="0" width="1" height="1" fill="#f0d080"/><rect x="769" y="0" width="1" height="1" fill="#f0d080"/><rect x="770" y="0" width="1" height="1" fill="#f0a040"/><rect x="772" y="0" width="1" height="1" fill="#602010"/><rect x="773" y="0" width="1" height="1" fill="#f0a040"/><rect x="774" y="0" width="1" height="1" fill="#c06020"/><rect x="775" y="0" width="1" height="1" fill="#602010"/><rect x="776" y="0" width="1" height="1" fill="#e0c060"/><rect x="777" y="0" width="1" height="1" fill="#c06020"/><rect x="778" y="0" width="1" height="1" fill="#f0a040"/><rect x="779" y="0" width="1" height="1" fill="#f0d080"/><rect x="780" y="0" width="1" height="1" fill="#f0d080"/><rect x="782" y="0" width="1" height="1" fill="#80a030"/><rect x="783" y="0" width="1" height="1" fill="#80a030"/><rect x="784" y="0" width="1" height="1" fill="#c06020"/><rect x="786" y="0" width="1" height="1" fill="#f0a040"/><rect x="788" y="0" width="1" height="1" fill="#602010"/><rect x="789" y="0" width="1" height="1" fill="#f0a040"/><rect x="790" y="0" width="1" height="1" fill="#d08040"/><rect x="791" y="0" width="1" height="1" fill="#f0a040"/><rect x="792" y="0" width="1" height="1" fill="#f0a040"/><rect x="793" y="0" width="1" height="1" fill="#f0a040"/><rect x="794" y="0" width="1" height="1" fill="#602010"/><rect x="796" y="0" width="1" height="1" fill="#f0a040"/><rect x="798" y="0" width="1" height="1" fill="#80a030"/><rect x="799" y="0" width="1" height="1" fill="#f0a040"/>
</svg>
<svg class="a" style="left:0;top:0" width="800" height="480" viewBox="0 0 800 480">
<defs>
<linearGradient id="gy" x1="0" y1="0" x2="0" y2="1"><stop offset="0" stop-color="#ffffb0"/><stop offset="0.3" stop-color="#f4f440"/><stop offset="0.6" stop-color="#eeee10"/><stop offset="1" stop-color="#d8d000"/></linearGradient>
<linearGradient id="gc" x1="0" y1="0" x2="0" y2="1"><stop offset="0" stop-color="#f8ffff"/><stop offset="0.35" stop-color="#c0ecf4"/><stop offset="1" stop-color="#88d0dc"/></linearGradient>
</defs>
<path d="M391 18h11l-5.5 6z" fill="#f0a028"/>
<path d="M391 25h10l1 1v11l-6 3l-6-3v-11z" fill="#f0a028"/>
<path d="M392 26.5h9v1.5h-4.2v9h-1.6v-9h-3.2z" fill="#1a0a00"/>
<path d="M0 211h13l5.5 5.5l-5.5 6.5h-13z" fill="url(#gy)"/>
<path d="M0 309h13l5.5 6l-5.5 6h-13z" fill="url(#gc)"/>
<path d="M150.5 13.5l1-1 1 1 1-1 1 1 1-1V4.5h2l1 1 1-1h1V12.5l1 1 1-1 1 1 1-1 1 1 1-1 1 1" fill="none" stroke="#fff" stroke-width="1"/>
<rect x="320" y="2" width="9.5" height="10.5" fill="#20e828"/>
<path d="M322.2 4.2h5.2v1.2h-2v5.5h-1.3v-5.5h-1.9z" fill="#002800"/>
</svg>
<svg class="a" style="left:0;top:0" width="30" height="330"><path d="M8 212h2v9h-2v-6.5l-2 1.2v-1.7z" fill="#000"/>
<path d="M5.8 313 C6 310.5 8 310 9 310 C11 310 12 311 12 312.6 C12 314.5 10 315.6 8.5 316.6 L7.4 317.3 H12 V319 H5.8 V317.6 L8.8 315.3 C9.8 314.5 10.2 313.8 10.2 312.9 C10.2 312 9.6 311.5 9 311.5 C8.2 311.5 7.6 312 7.5 313.2z" fill="#000"/></svg>

<!-- measurement boxes -->
<div class="box" style="left:1px;top:383px;width:347px;height:42px"></div>
<div class="box" style="left:351px;top:383px;width:360px;height:42px"></div>
<div class="bd" style="left:9px;top:386px"></div>
<div class="bd" style="left:9px;top:406px"></div>
<div class="bd" style="left:359px;top:386px"></div>
<div class="bd" style="left:359px;top:406px"></div>
<!-- scale row -->
<div class="box bx2" style="left:1px;top:431px;width:347px;height:22px"></div>
<div class="box bx2" style="left:352px;top:431px;width:201px;height:22px"></div>
<div class="box bx2" style="left:557px;top:431px;width:241px;height:22px"></div>
<div class="bd" style="left:11px;top:434px"></div>
<div class="bd bd2" style="left:171px;top:434px"></div>
<svg class="a" style="left:598px;top:435px" width="12" height="12"><path d="M2 9.5h2.5l4-7h2" fill="none" stroke="#f0f038" stroke-width="1.2"/></svg>
<!-- status row -->
<div class="box bx2" style="left:1px;top:454px;width:797px;height:22px"></div>

<!-- side panel -->
<div class="a" style="left:693px;top:1px;width:120px;height:427px;background:#eea048;border-radius:6px 0 0 3px"></div>
<div class="a" style="left:695px;top:2px;width:120px;height:424px;background:#2a1408;border-radius:5px 0 0 2px"></div>
<div class="a" style="left:696px;top:3px;width:120px;height:422px;background:#404c98;border-radius:4px 0 0 1px"></div>
<div class="btn" style="top:24px;height:80px;background:#88acf8;border-top:1px solid #c8d4f4;border-left:1px solid #d0dcf8;border-bottom:1px solid #302030;box-shadow:inset 0 1px 0 #a8c0f4,inset 0 -1px 0 #885038,inset 0 -2px 0 #c09070,inset 0 -3px 0 #b8b8d0"></div>
<div class="btn bn" style="top:105px;height:79px"></div>
<div class="btn bn" style="top:186px;height:79px"></div>
<div class="btn bn" style="top:348px;height:77px;border-radius:5px 0 0 2px"></div>
<svg class="a" style="left:0;top:0" width="800" height="480">
<path d="M727.00 63.80 L727.25 65.49 L727.50 66.36 L727.75 67.04 L728.00 67.62 L728.25 68.11 L728.50 68.55 L728.75 68.92 L729.00 69.24 L729.25 69.50 L729.50 69.72 L729.75 69.89 L730.00 70.00 L730.25 70.08 L730.50 70.10 L730.75 70.08 L731.00 70.00 L731.25 69.89 L731.50 69.72 L731.75 69.50 L732.00 69.24 L732.25 68.92 L732.50 68.55 L732.75 68.11 L733.00 67.62 L733.25 67.04 L733.50 66.36 L733.75 65.49 L734.00 63.80 L734.25 62.11 L734.50 61.24 L734.75 60.56 L735.00 59.98 L735.25 59.49 L735.50 59.05 L735.75 58.68 L736.00 58.36 L736.25 58.10 L736.50 57.88 L736.75 57.71 L737.00 57.60 L737.25 57.52 L737.50 57.50 L737.75 57.52 L738.00 57.60 L738.25 57.71 L738.50 57.88 L738.75 58.10 L739.00 58.36 L739.25 58.68 L739.50 59.05 L739.75 59.49 L740.00 59.98 L740.25 60.56 L740.50 61.24 L740.75 62.11 L741.00 63.80 L741.25 65.49 L741.50 66.36 L741.75 67.04 L742.00 67.62 L742.25 68.11 L742.50 68.55 L742.75 68.92 L743.00 69.24 L743.25 69.50 L743.50 69.72 L743.75 69.89 L744.00 70.00 L744.25 70.08 L744.50 70.10 L744.75 70.08 L745.00 70.00 L745.25 69.89 L745.50 69.72 L745.75 69.50 L746.00 69.24 L746.25 68.92 L746.50 68.55 L746.75 68.11 L747.00 67.62 L747.25 67.04 L747.50 66.36 L747.75 65.49 L748.00 63.80 L748.25 62.11 L748.50 61.24 L748.75 60.56 L749.00 59.98 L749.25 59.49 L749.50 59.05 L749.75 58.68 L750.00 58.36 L750.25 58.10 L750.50 57.88 L750.75 57.71 L751.00 57.60 L751.25 57.52 L751.50 57.50 L751.75 57.52 L752.00 57.60 L752.25 57.71 L752.50 57.88 L752.75 58.10 L753.00 58.36 L753.25 58.68 L753.50 59.05 L753.75 59.49 L754.00 59.98 L754.25 60.56 L754.50 61.24 L754.75 62.11 L755.00 63.80 L755.25 65.49 L755.50 66.36 L755.75 67.04 L756.00 67.62 L756.25 68.11 L756.50 68.55 L756.75 68.92 L757.00 69.24 L757.25 69.50 L757.50 69.72 L757.75 69.89 L758.00 70.00 L758.25 70.08 L758.50 70.10 L758.75 70.08 L759.00 70.00 L759.25 69.89 L759.50 69.72 L759.75 69.50 L760.00 69.24 L760.25 68.92 L760.50 68.55 L760.75 68.11 L761.00 67.62 L761.25 67.04 L761.50 66.36 L761.75 65.49 L762.00 63.80 L762.25 62.11 L762.50 61.24 L762.75 60.56 L763.00 59.98 L763.25 59.49 L763.50 59.05 L763.75 58.68 L764.00 58.36 L764.25 58.10 L764.50 57.88 L764.75 57.71 L765.00 57.60 L765.25 57.52 L765.50 57.50 L765.75 57.52 L766.00 57.60 L766.25 57.71 L766.50 57.88 L766.75 58.10 L767.00 58.36 L767.25 58.68 L767.50 59.05 L767.75 59.49 L768.00 59.98 L768.25 60.56 L768.50 61.24 L768.75 62.11 L769.00 63.80 L769.25 65.49" fill="none" stroke="#fff" stroke-width="1.3"/>
<path d="M736.00 145.00 L736.25 146.25 L736.50 146.89 L736.75 147.40 L737.00 147.84 L737.25 148.24 L737.50 148.60 L737.75 148.92 L738.00 149.22 L738.25 149.50 L738.50 149.75 L738.75 149.98 L739.00 150.20 L739.25 150.39 L739.50 150.57 L739.75 150.73 L740.00 150.87 L740.25 151.00 L740.50 151.10 L740.75 151.19 L741.00 151.27 L741.25 151.33 L741.50 151.37 L741.75 151.39 L742.00 151.40 L742.25 151.39 L742.50 151.37 L742.75 151.33 L743.00 151.27 L743.25 151.19 L743.50 151.10 L743.75 151.00 L744.00 150.87 L744.25 150.73 L744.50 150.57 L744.75 150.39 L745.00 150.20 L745.25 149.98 L745.50 149.75 L745.75 149.50 L746.00 149.22 L746.25 148.92 L746.50 148.60 L746.75 148.24 L747.00 147.84 L747.25 147.40 L747.50 146.89 L747.75 146.25 L748.00 145.00 L748.25 143.75 L748.50 143.11 L748.75 142.60 L749.00 142.16 L749.25 141.76 L749.50 141.40 L749.75 141.08 L750.00 140.78 L750.25 140.50 L750.50 140.25 L750.75 140.02 L751.00 139.80 L751.25 139.61 L751.50 139.43 L751.75 139.27 L752.00 139.13 L752.25 139.00 L752.50 138.90 L752.75 138.81 L753.00 138.73 L753.25 138.67 L753.50 138.63 L753.75 138.61 L754.00 138.60 L754.25 138.61 L754.50 138.63 L754.75 138.67 L755.00 138.73 L755.25 138.81 L755.50 138.90 L755.75 139.00 L756.00 139.13 L756.25 139.27 L756.50 139.43 L756.75 139.61 L757.00 139.80 L757.25 140.02 L757.50 140.25 L757.75 140.50 L758.00 140.78 L758.25 141.08 L758.50 141.40 L758.75 141.76 L759.00 142.16 L759.25 142.60 L759.50 143.11 L759.75 143.75 L760.00 145.00 L760.25 146.25" fill="none" stroke="#fff" stroke-width="1.3"/>
<path d="M736 214.5 L737.5 213 L739 207.5 L740.5 206.5 L742 208 L743.5 214 L744.5 214.5 L748.8 210.2 L752.6 214.5 L755 212 L757.8 214.5 H760" fill="none" stroke="#fff" stroke-width="1.2"/>
</svg>
<svg class="a" style="left:0;top:0" width="800" height="480">
<g fill="#000">
<path d="M23.5 389.4h1.9v8.4h-1.9v-6.2l-2.2 1.2v-1.6z"/>
<path d="M23.5 409.4h1.9v8.4h-1.9v-6.2l-2.2 1.2v-1.6z"/>
<path d="M373.5 389.4h1.9v8.4h-1.9v-6.2l-2.2 1.2v-1.6z"/>
<path d="M373.5 409.4h1.9v8.4h-1.9v-6.2l-2.2 1.2v-1.6z"/>
<path d="M25.5 437.4h1.9v8.4h-1.9v-6.2l-2.2 1.2v-1.6z"/>
<path d="M182.9 440.1 C182.9 438.6 183.9 437.9 185.2 437.9 C186.6 437.9 187.5 438.7 187.5 439.9 C187.5 441.1 186.6 441.8 185.4 442.6 L182.8 444.7 H188" fill="none" stroke="#000" stroke-width="1.35"/>
</g></svg>
<div class="a" style="left:1px;top:-2px;-webkit-text-stroke:0.5px #000018;font-size:18px;font-weight:bold;color:#000018;letter-spacing:-1.00px">Tek</div><div class="a" style="left:335px;top:1px;height:15px;overflow:hidden;font-size:16px;font-weight:normal;color:#34c864;letter-spacing:1.00px">Trig&#39;d</div><div class="a" style="left:530px;top:1px;font-size:16px;font-weight:normal;color:#f0f0f8;letter-spacing:0.50px">M Pos: 0.000s</div><div class="a" style="left:721px;top:6px;font-size:16px;font-weight:normal;color:#f0f0ff;letter-spacing:0.83px">Autoset</div><div class="a" style="left:733px;top:226px;font-size:16px;font-weight:normal;color:#000a28;letter-spacing:1.00px">FFT</div><div class="a" style="left:727px;top:370px;font-size:16px;font-weight:normal;color:#000a30;letter-spacing:1.00px">Undo</div><div class="a" style="left:718px;top:388px;font-size:16px;font-weight:normal;color:#000a30;letter-spacing:1.00px">Autoset</div><div class="a" style="left:45px;top:387px;font-size:16px;font-weight:normal;color:#f0f038;letter-spacing:-0.12px">Peak-Peak</div><div class="a" style="left:45px;top:407px;font-size:16px;font-weight:normal;color:#f0f038;letter-spacing:0.40px">Period</div><div class="a" style="left:214px;top:386px;font-size:16px;font-weight:normal;color:#f0f038;letter-spacing:0.25px">5.28V</div><div class="a" style="left:215px;top:406px;font-size:16px;font-weight:normal;color:#f0f038;letter-spacing:0.17px">1.025ms</div><div class="a" style="left:394px;top:387px;font-size:16px;font-weight:normal;color:#f0f038;letter-spacing:-0.38px">Cycle RMS</div><div class="a" style="left:394px;top:407px;font-size:16px;font-weight:normal;color:#f0f038;letter-spacing:0.12px">Frequency</div><div class="a" style="left:564px;top:386px;font-size:16px;font-weight:normal;color:#f0f038;letter-spacing:0.25px">2.64V</div><div class="a" style="left:565px;top:406px;font-size:16px;font-weight:normal;color:#f0f038;letter-spacing:0.29px">1.004kHz</div><div class="a" style="left:50px;top:433px;font-size:16px;font-weight:normal;color:#f0f038;letter-spacing:0.00px">2.00V</div><div class="a" style="left:211px;top:433px;font-size:16px;font-weight:normal;color:#40c4cc;letter-spacing:0.00px">1.00V</div><div class="a" style="left:360px;top:434px;font-size:16px;font-weight:normal;color:#f0f0f8;letter-spacing:0.50px">M 250us</div><div class="a" style="left:567px;top:434px;font-size:16px;font-weight:normal;color:#f0f038;letter-spacing:-1.50px">Ch1</div><div class="a" style="left:613px;top:434px;font-size:16px;font-weight:normal;color:#f0f038;letter-spacing:-0.25px">2.26V</div><div class="a" style="left:692px;top:434px;font-size:16px;font-weight:normal;color:#f0f038;letter-spacing:0.00px">1.00177kHz</div><div class="a" style="left:5px;top:457px;font-size:16px;font-weight:normal;color:#f0f0f8;letter-spacing:0.14px">Please wait....</div><div class="a" style="left:640px;top:456px;font-size:16px;font-weight:normal;color:#f0f0f8;letter-spacing:0.33px">Nov 07, 2023, 16:25</div>
</body></html>
